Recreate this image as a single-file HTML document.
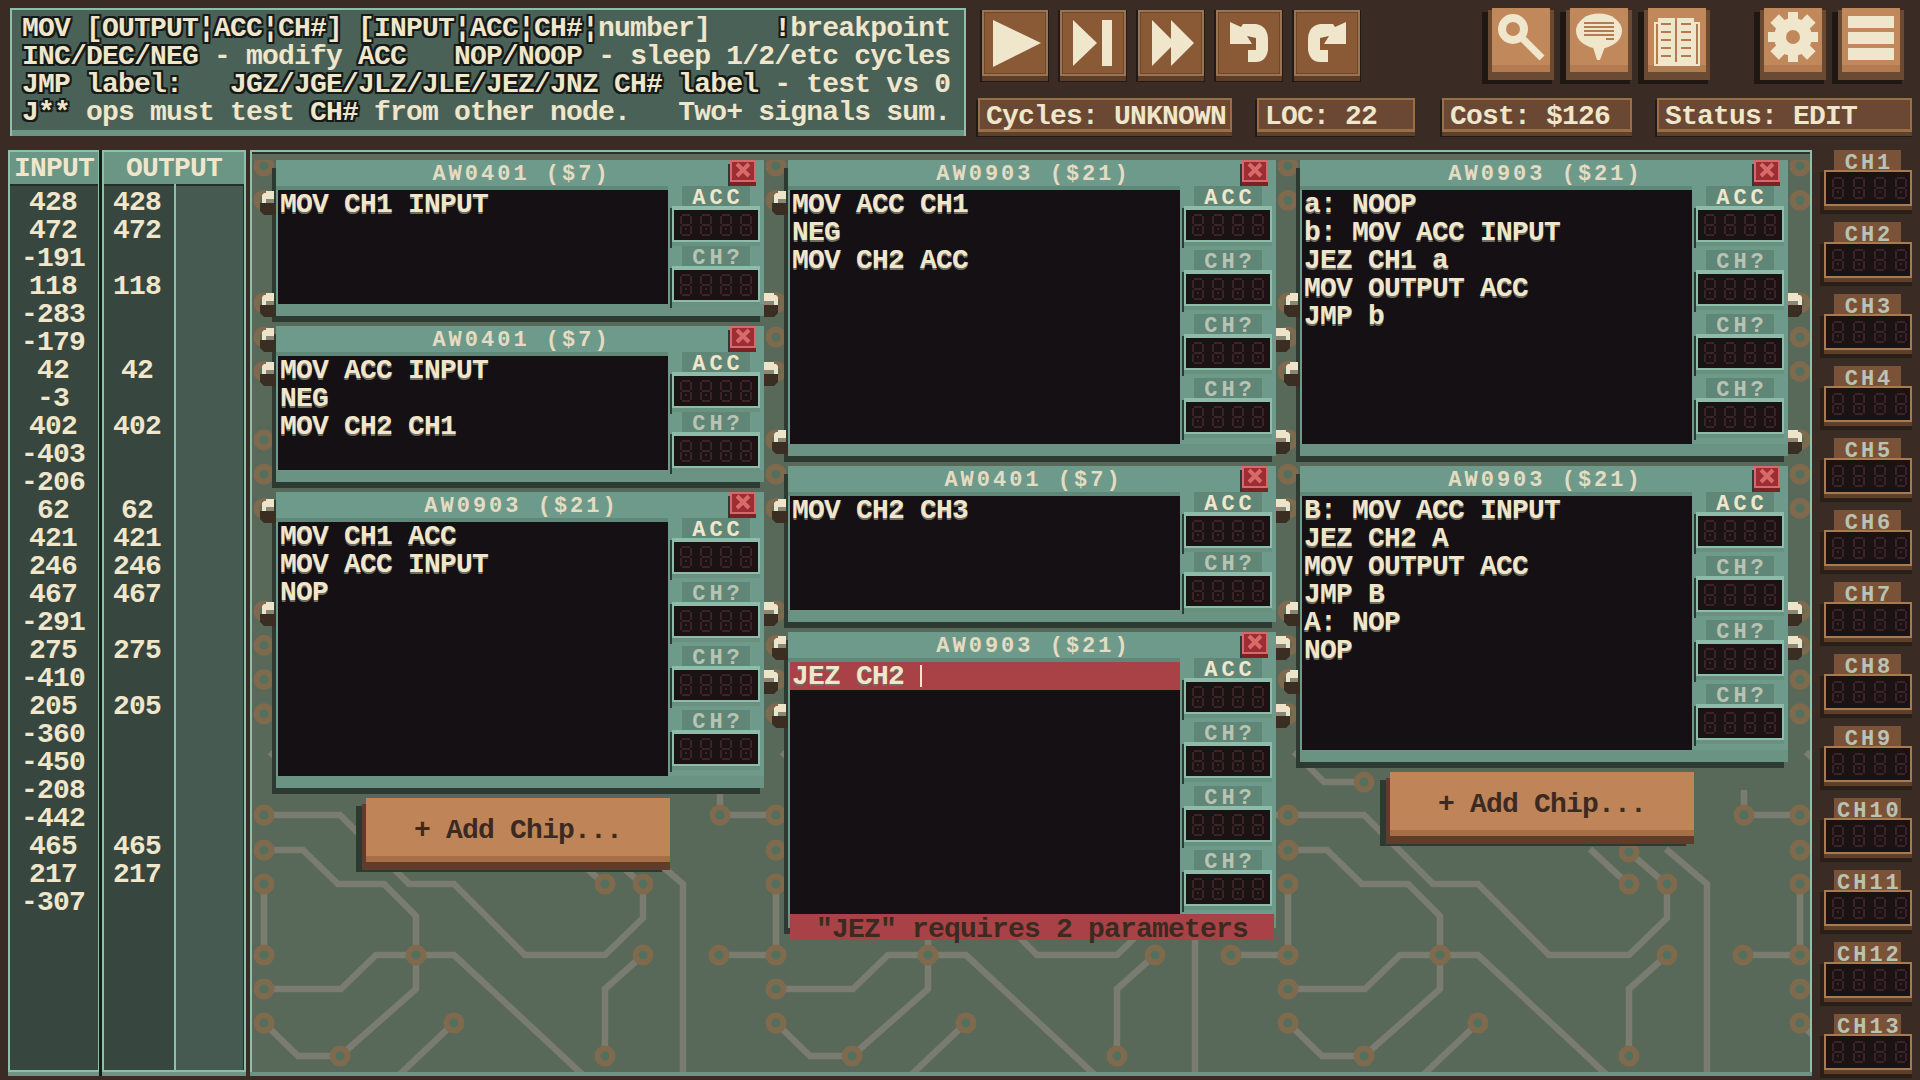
<!DOCTYPE html>
<html><head><meta charset="utf-8"><style>
html,body{margin:0;padding:0;}
body{width:1920px;height:1080px;overflow:hidden;background:#3a2b24;position:relative;font-family:"Liberation Mono",monospace;}
body div, body svg{position:absolute;}
body div{white-space:pre;}
.t{font-size:28px;letter-spacing:-0.8px;line-height:28px;color:#efe6cb;font-weight:bold;}
.t span{position:static;}
.o{text-shadow:2px 0 0 #151a18,-2px 0 0 #151a18,0 2px 0 #151a18,0 -2px 0 #151a18,2px 2px 0 #151a18,-2px 2px 0 #151a18,2px -2px 0 #151a18,-2px -2px 0 #151a18;}
.st{font-weight:bold;}
.hd{font-weight:bold;}
.num{font-weight:bold;}
.code{font-weight:bold;text-shadow:0 2px 0 #6f6c62;}
.tt{font-size:22px;line-height:24px;color:#e3dcc2;font-weight:bold;text-align:center;letter-spacing:3px;padding-left:3px;}
.rl{font-size:22px;line-height:20px;font-weight:bold;text-align:center;letter-spacing:4px;padding-left:4px;}
.err{font-size:28px;letter-spacing:-0.8px;line-height:28px;color:#3b2a22;font-weight:bold;text-align:center;}
.add{font-size:28px;letter-spacing:-0.8px;line-height:28px;color:#3b2a22;font-weight:bold;text-align:center;}
.ch{font-size:22px;line-height:20px;color:#b9c3b3;font-weight:bold;text-align:center;letter-spacing:3px;padding-left:3px;}
</style></head><body>
<svg width="0" height="0" style="position:absolute"><defs><g id="dig" fill="#3b2326"><rect x="2" y="0" width="8" height="2"/><rect x="2" y="10" width="8" height="2"/><rect x="2" y="20" width="8" height="2"/><rect x="0" y="2" width="2" height="8"/><rect x="10" y="2" width="2" height="8"/><rect x="0" y="12" width="2" height="8"/><rect x="10" y="12" width="2" height="8"/><rect x="5" y="14" width="2" height="2"/></g></defs></svg>
<div style="left:10px;top:8px;width:956px;height:128px;background:#8dbfaa;"></div>
<div style="left:12px;top:10px;width:952px;height:120px;background:#4a6158;"></div>
<div style="left:12px;top:130px;width:952px;height:6px;background:#6d9585;"></div>
<div class="t" style="left:22px;top:15px"><span class="o">MOV&nbsp;[OUTPUT¦ACC¦CH#]</span><span class="o">&nbsp;[INPUT¦ACC¦CH#¦</span><span>number]</span><span>&nbsp;&nbsp;&nbsp;&nbsp;</span><span class="o">!</span><span>breakpoint</span></div>
<div class="t" style="left:22px;top:43px"><span class="o">INC/DEC/NEG</span><span>&nbsp;-&nbsp;modify&nbsp;</span><span class="o">ACC</span><span>&nbsp;&nbsp;&nbsp;</span><span class="o">NOP/NOOP</span><span>&nbsp;-&nbsp;sleep&nbsp;1/2/etc&nbsp;cycles</span></div>
<div class="t" style="left:22px;top:71px"><span class="o">JMP&nbsp;label:</span><span>&nbsp;&nbsp;&nbsp;</span><span class="o">JGZ/JGE/JLZ/JLE/JEZ/JNZ&nbsp;CH#&nbsp;label</span><span>&nbsp;-&nbsp;test&nbsp;vs&nbsp;0</span></div>
<div class="t" style="left:22px;top:99px"><span class="o">J**</span><span>&nbsp;ops&nbsp;must&nbsp;test&nbsp;</span><span class="o">CH#</span><span>&nbsp;from&nbsp;other&nbsp;node.&nbsp;&nbsp;&nbsp;Two+&nbsp;signals&nbsp;sum.</span></div>
<div style="left:980px;top:10px;width:69px;height:72px;background:#231a15;"></div>
<div style="left:982px;top:10px;width:66px;height:66px;background:#9a7553;"></div>
<div style="left:984px;top:12px;width:62px;height:62px;background:#6f462b;"></div>
<div style="left:985px;top:13px;width:60px;height:60px;background:#8a5a37;"></div>
<div style="left:982px;top:76px;width:66px;height:5px;background:#5d3d27;"></div>
<svg style="left:982px;top:10px" width="66" height="66" viewBox="0 0 66 66"><polygon points="11,10 59,33 11,57" fill="#efe6cb"/></svg>
<div style="left:1058px;top:10px;width:69px;height:72px;background:#231a15;"></div>
<div style="left:1060px;top:10px;width:66px;height:66px;background:#9a7553;"></div>
<div style="left:1062px;top:12px;width:62px;height:62px;background:#6f462b;"></div>
<div style="left:1063px;top:13px;width:60px;height:60px;background:#8a5a37;"></div>
<div style="left:1060px;top:76px;width:66px;height:5px;background:#5d3d27;"></div>
<svg style="left:1060px;top:10px" width="66" height="66" viewBox="0 0 66 66"><polygon points="13,10 37,33 13,56" fill="#efe6cb"/><rect x="42" y="10" width="10" height="46" fill="#efe6cb"/></svg>
<div style="left:1136px;top:10px;width:69px;height:72px;background:#231a15;"></div>
<div style="left:1138px;top:10px;width:66px;height:66px;background:#9a7553;"></div>
<div style="left:1140px;top:12px;width:62px;height:62px;background:#6f462b;"></div>
<div style="left:1141px;top:13px;width:60px;height:60px;background:#8a5a37;"></div>
<div style="left:1138px;top:76px;width:66px;height:5px;background:#5d3d27;"></div>
<svg style="left:1138px;top:10px" width="66" height="66" viewBox="0 0 66 66"><polygon points="14,10 37,33 14,56" fill="#efe6cb"/><polygon points="33,10 56,33 33,56" fill="#efe6cb"/></svg>
<div style="left:1214px;top:10px;width:69px;height:72px;background:#231a15;"></div>
<div style="left:1216px;top:10px;width:66px;height:66px;background:#9a7553;"></div>
<div style="left:1218px;top:12px;width:62px;height:62px;background:#6f462b;"></div>
<div style="left:1219px;top:13px;width:60px;height:60px;background:#8a5a37;"></div>
<div style="left:1216px;top:76px;width:66px;height:5px;background:#5d3d27;"></div>
<svg style="left:1216px;top:10px" width="66" height="66" viewBox="0 0 66 66"><path d="M14,12 L25,17 L27,14 L40,14 Q52,16 52,30 L52,40 Q50,52 40,52 L32,52 L32,40 L40,40 L40,28 L31,26 L36,34 L14,34 Z" fill="#efe6cb"/></svg>
<div style="left:1292px;top:10px;width:69px;height:72px;background:#231a15;"></div>
<div style="left:1294px;top:10px;width:66px;height:66px;background:#9a7553;"></div>
<div style="left:1296px;top:12px;width:62px;height:62px;background:#6f462b;"></div>
<div style="left:1297px;top:13px;width:60px;height:60px;background:#8a5a37;"></div>
<div style="left:1294px;top:76px;width:66px;height:5px;background:#5d3d27;"></div>
<svg style="left:1294px;top:10px" width="66" height="66" viewBox="0 0 66 66"><path d="M14,12 L25,17 L27,14 L40,14 Q52,16 52,30 L52,40 Q50,52 40,52 L32,52 L32,40 L40,40 L40,28 L31,26 L36,34 L14,34 Z" fill="#efe6cb" transform="translate(66 0) scale(-1 1)"/></svg>
<div style="left:976px;top:100px;width:256px;height:37px;background:#231a15;"></div>
<div style="left:978px;top:98px;width:254px;height:34px;background:#9a6e47;"></div>
<div style="left:980px;top:100px;width:250px;height:29px;background:#6a4833;"></div>
<div style="left:978px;top:132px;width:254px;height:4px;background:#5e412c;"></div>
<div class="st" style="left:986px;top:103px;font-size:28px;letter-spacing:-0.8px;line-height:28px;color:#efe6cb;">Cycles:&nbsp;UNKNOWN</div>
<div style="left:1255px;top:100px;width:160px;height:37px;background:#231a15;"></div>
<div style="left:1257px;top:98px;width:158px;height:34px;background:#9a6e47;"></div>
<div style="left:1259px;top:100px;width:154px;height:29px;background:#6a4833;"></div>
<div style="left:1257px;top:132px;width:158px;height:4px;background:#5e412c;"></div>
<div class="st" style="left:1265px;top:103px;font-size:28px;letter-spacing:-0.8px;line-height:28px;color:#efe6cb;">LOC:&nbsp;22</div>
<div style="left:1440px;top:100px;width:192px;height:37px;background:#231a15;"></div>
<div style="left:1442px;top:98px;width:190px;height:34px;background:#9a6e47;"></div>
<div style="left:1444px;top:100px;width:186px;height:29px;background:#6a4833;"></div>
<div style="left:1442px;top:132px;width:190px;height:4px;background:#5e412c;"></div>
<div class="st" style="left:1450px;top:103px;font-size:28px;letter-spacing:-0.8px;line-height:28px;color:#efe6cb;">Cost:&nbsp;$126</div>
<div style="left:1655px;top:100px;width:257px;height:37px;background:#231a15;"></div>
<div style="left:1657px;top:98px;width:255px;height:34px;background:#9a6e47;"></div>
<div style="left:1659px;top:100px;width:251px;height:29px;background:#6a4833;"></div>
<div style="left:1657px;top:132px;width:255px;height:4px;background:#5e412c;"></div>
<div class="st" style="left:1665px;top:103px;font-size:28px;letter-spacing:-0.8px;line-height:28px;color:#efe6cb;">Status:&nbsp;EDIT</div>
<div style="left:1482px;top:12px;width:70px;height:72px;background:#1f1712;"></div>
<div style="left:1488px;top:10px;width:66px;height:70px;background:#6b4a33;"></div>
<div style="left:1492px;top:8px;width:58px;height:64px;background:#c0885b;"></div>
<div style="left:1492px;top:65px;width:58px;height:7px;background:#b27b50;"></div>
<svg style="left:1492px;top:8px" width="58" height="64" viewBox="0 0 58 64"><circle cx="21" cy="21" r="11" fill="none" stroke="#efe6cb" stroke-width="8"/><line x1="31" y1="31" x2="50" y2="50" stroke="#efe6cb" stroke-width="7"/></svg>
<div style="left:1560px;top:12px;width:70px;height:72px;background:#1f1712;"></div>
<div style="left:1566px;top:10px;width:66px;height:70px;background:#6b4a33;"></div>
<div style="left:1570px;top:8px;width:58px;height:64px;background:#c0885b;"></div>
<div style="left:1570px;top:65px;width:58px;height:7px;background:#b27b50;"></div>
<svg style="left:1570px;top:8px" width="58" height="64" viewBox="0 0 58 64"><ellipse cx="29" cy="23" rx="23" ry="17.5" fill="#efe6cb"/><path d="M22,36 L36,36 L30,52 L27,52 Z" fill="#efe6cb"/><rect x="14" y="14" width="30" height="2" fill="#b57a4f"/><rect x="14" y="18" width="30" height="2" fill="#b57a4f"/><rect x="14" y="22" width="30" height="2" fill="#b57a4f"/><rect x="14" y="26" width="30" height="2" fill="#b57a4f"/><rect x="36" y="30" width="8" height="2" fill="#b57a4f"/></svg>
<div style="left:1638px;top:12px;width:70px;height:72px;background:#1f1712;"></div>
<div style="left:1644px;top:10px;width:66px;height:70px;background:#6b4a33;"></div>
<div style="left:1648px;top:8px;width:58px;height:64px;background:#c0885b;"></div>
<div style="left:1648px;top:65px;width:58px;height:7px;background:#b27b50;"></div>
<svg style="left:1648px;top:8px" width="58" height="64" viewBox="0 0 58 64"><rect x="6" y="14" width="46" height="44" fill="#efe6cb"/><rect x="10" y="10" width="17" height="42" fill="#efe6cb"/><rect x="29" y="10" width="17" height="42" fill="#efe6cb"/><rect x="27" y="12" width="2" height="42" fill="#b57a4f"/><rect x="8" y="16" width="2" height="40" fill="#b57a4f"/><rect x="48" y="16" width="2" height="40" fill="#b57a4f"/><rect x="13" y="15" width="10" height="2" fill="#b57a4f"/><rect x="33" y="15" width="10" height="2" fill="#b57a4f"/><rect x="13" y="23" width="10" height="2" fill="#b57a4f"/><rect x="33" y="23" width="10" height="2" fill="#b57a4f"/><rect x="13" y="31" width="10" height="2" fill="#b57a4f"/><rect x="33" y="31" width="10" height="2" fill="#b57a4f"/><rect x="13" y="39" width="10" height="2" fill="#b57a4f"/><rect x="33" y="39" width="10" height="2" fill="#b57a4f"/><rect x="13" y="47" width="10" height="2" fill="#b57a4f"/><rect x="33" y="47" width="10" height="2" fill="#b57a4f"/></svg>
<div style="left:1754px;top:12px;width:70px;height:72px;background:#1f1712;"></div>
<div style="left:1760px;top:10px;width:66px;height:70px;background:#6b4a33;"></div>
<div style="left:1764px;top:8px;width:58px;height:64px;background:#c0885b;"></div>
<div style="left:1764px;top:65px;width:58px;height:7px;background:#b27b50;"></div>
<svg style="left:1764px;top:8px" width="58" height="64" viewBox="0 0 58 64"><rect x="24" y="4" width="10" height="50" fill="#efe6cb"/><rect x="4" y="24" width="50" height="10" fill="#efe6cb"/><rect x="23" y="3" width="12" height="52" fill="#efe6cb" transform="rotate(45 29 29)"/><rect x="3" y="23" width="52" height="12" fill="#efe6cb" transform="rotate(45 29 29)"/><circle cx="29" cy="29" r="19" fill="#efe6cb"/><circle cx="29" cy="29" r="7" fill="#c0885b"/></svg>
<div style="left:1832px;top:12px;width:70px;height:72px;background:#1f1712;"></div>
<div style="left:1838px;top:10px;width:66px;height:70px;background:#6b4a33;"></div>
<div style="left:1842px;top:8px;width:58px;height:64px;background:#c0885b;"></div>
<div style="left:1842px;top:65px;width:58px;height:7px;background:#b27b50;"></div>
<svg style="left:1842px;top:8px" width="58" height="64" viewBox="0 0 58 64"><rect x="6" y="8" width="46" height="12" fill="#efe6cb"/><rect x="6" y="24" width="46" height="12" fill="#efe6cb"/><rect x="6" y="40" width="46" height="12" fill="#efe6cb"/></svg>
<div style="left:8px;top:150px;width:92px;height:926px;background:#8dbfaa;"></div>
<div style="left:10px;top:152px;width:88px;height:32px;background:#6b9585;"></div>
<div style="left:10px;top:184px;width:88px;height:886px;background:#233029;"></div>
<div style="left:8px;top:1072px;width:92px;height:4px;background:#6d9585;"></div>
<div class="hd" style="left:8px;top:155px;font-size:28px;letter-spacing:-0.8px;line-height:28px;color:#efe6cb;width:92px;text-align:center;">INPUT</div>
<div style="left:10px;top:186px;width:88px;height:884px;background:#37463f;"></div>
<div style="left:99px;top:150px;width:4px;height:926px;background:#1c1a15;"></div>
<div style="left:102px;top:150px;width:144px;height:926px;background:#8dbfaa;"></div>
<div style="left:104px;top:152px;width:140px;height:32px;background:#6b9585;"></div>
<div style="left:104px;top:184px;width:140px;height:886px;background:#233029;"></div>
<div style="left:102px;top:1072px;width:144px;height:4px;background:#6d9585;"></div>
<div class="hd" style="left:102px;top:155px;font-size:28px;letter-spacing:-0.8px;line-height:28px;color:#efe6cb;width:144px;text-align:center;">OUTPUT</div>
<div style="left:104px;top:186px;width:70px;height:884px;background:#37463f;"></div>
<div style="left:174px;top:184px;width:2px;height:886px;background:#8dbfaa;"></div>
<div style="left:176px;top:186px;width:67px;height:884px;background:#465a52;"></div>
<div class="num" style="left:9px;top:189px;font-size:28px;letter-spacing:-0.8px;line-height:28px;color:#efe6cb;width:88px;text-align:center;">428</div>
<div class="num" style="left:9px;top:217px;font-size:28px;letter-spacing:-0.8px;line-height:28px;color:#efe6cb;width:88px;text-align:center;">472</div>
<div class="num" style="left:9px;top:245px;font-size:28px;letter-spacing:-0.8px;line-height:28px;color:#efe6cb;width:88px;text-align:center;">-191</div>
<div class="num" style="left:9px;top:273px;font-size:28px;letter-spacing:-0.8px;line-height:28px;color:#efe6cb;width:88px;text-align:center;">118</div>
<div class="num" style="left:9px;top:301px;font-size:28px;letter-spacing:-0.8px;line-height:28px;color:#efe6cb;width:88px;text-align:center;">-283</div>
<div class="num" style="left:9px;top:329px;font-size:28px;letter-spacing:-0.8px;line-height:28px;color:#efe6cb;width:88px;text-align:center;">-179</div>
<div class="num" style="left:9px;top:357px;font-size:28px;letter-spacing:-0.8px;line-height:28px;color:#efe6cb;width:88px;text-align:center;">42</div>
<div class="num" style="left:9px;top:385px;font-size:28px;letter-spacing:-0.8px;line-height:28px;color:#efe6cb;width:88px;text-align:center;">-3</div>
<div class="num" style="left:9px;top:413px;font-size:28px;letter-spacing:-0.8px;line-height:28px;color:#efe6cb;width:88px;text-align:center;">402</div>
<div class="num" style="left:9px;top:441px;font-size:28px;letter-spacing:-0.8px;line-height:28px;color:#efe6cb;width:88px;text-align:center;">-403</div>
<div class="num" style="left:9px;top:469px;font-size:28px;letter-spacing:-0.8px;line-height:28px;color:#efe6cb;width:88px;text-align:center;">-206</div>
<div class="num" style="left:9px;top:497px;font-size:28px;letter-spacing:-0.8px;line-height:28px;color:#efe6cb;width:88px;text-align:center;">62</div>
<div class="num" style="left:9px;top:525px;font-size:28px;letter-spacing:-0.8px;line-height:28px;color:#efe6cb;width:88px;text-align:center;">421</div>
<div class="num" style="left:9px;top:553px;font-size:28px;letter-spacing:-0.8px;line-height:28px;color:#efe6cb;width:88px;text-align:center;">246</div>
<div class="num" style="left:9px;top:581px;font-size:28px;letter-spacing:-0.8px;line-height:28px;color:#efe6cb;width:88px;text-align:center;">467</div>
<div class="num" style="left:9px;top:609px;font-size:28px;letter-spacing:-0.8px;line-height:28px;color:#efe6cb;width:88px;text-align:center;">-291</div>
<div class="num" style="left:9px;top:637px;font-size:28px;letter-spacing:-0.8px;line-height:28px;color:#efe6cb;width:88px;text-align:center;">275</div>
<div class="num" style="left:9px;top:665px;font-size:28px;letter-spacing:-0.8px;line-height:28px;color:#efe6cb;width:88px;text-align:center;">-410</div>
<div class="num" style="left:9px;top:693px;font-size:28px;letter-spacing:-0.8px;line-height:28px;color:#efe6cb;width:88px;text-align:center;">205</div>
<div class="num" style="left:9px;top:721px;font-size:28px;letter-spacing:-0.8px;line-height:28px;color:#efe6cb;width:88px;text-align:center;">-360</div>
<div class="num" style="left:9px;top:749px;font-size:28px;letter-spacing:-0.8px;line-height:28px;color:#efe6cb;width:88px;text-align:center;">-450</div>
<div class="num" style="left:9px;top:777px;font-size:28px;letter-spacing:-0.8px;line-height:28px;color:#efe6cb;width:88px;text-align:center;">-208</div>
<div class="num" style="left:9px;top:805px;font-size:28px;letter-spacing:-0.8px;line-height:28px;color:#efe6cb;width:88px;text-align:center;">-442</div>
<div class="num" style="left:9px;top:833px;font-size:28px;letter-spacing:-0.8px;line-height:28px;color:#efe6cb;width:88px;text-align:center;">465</div>
<div class="num" style="left:9px;top:861px;font-size:28px;letter-spacing:-0.8px;line-height:28px;color:#efe6cb;width:88px;text-align:center;">217</div>
<div class="num" style="left:9px;top:889px;font-size:28px;letter-spacing:-0.8px;line-height:28px;color:#efe6cb;width:88px;text-align:center;">-307</div>
<div class="num" style="left:102px;top:189px;font-size:28px;letter-spacing:-0.8px;line-height:28px;color:#efe6cb;width:70px;text-align:center;">428</div>
<div class="num" style="left:102px;top:217px;font-size:28px;letter-spacing:-0.8px;line-height:28px;color:#efe6cb;width:70px;text-align:center;">472</div>
<div class="num" style="left:102px;top:273px;font-size:28px;letter-spacing:-0.8px;line-height:28px;color:#efe6cb;width:70px;text-align:center;">118</div>
<div class="num" style="left:102px;top:357px;font-size:28px;letter-spacing:-0.8px;line-height:28px;color:#efe6cb;width:70px;text-align:center;">42</div>
<div class="num" style="left:102px;top:413px;font-size:28px;letter-spacing:-0.8px;line-height:28px;color:#efe6cb;width:70px;text-align:center;">402</div>
<div class="num" style="left:102px;top:497px;font-size:28px;letter-spacing:-0.8px;line-height:28px;color:#efe6cb;width:70px;text-align:center;">62</div>
<div class="num" style="left:102px;top:525px;font-size:28px;letter-spacing:-0.8px;line-height:28px;color:#efe6cb;width:70px;text-align:center;">421</div>
<div class="num" style="left:102px;top:553px;font-size:28px;letter-spacing:-0.8px;line-height:28px;color:#efe6cb;width:70px;text-align:center;">246</div>
<div class="num" style="left:102px;top:581px;font-size:28px;letter-spacing:-0.8px;line-height:28px;color:#efe6cb;width:70px;text-align:center;">467</div>
<div class="num" style="left:102px;top:637px;font-size:28px;letter-spacing:-0.8px;line-height:28px;color:#efe6cb;width:70px;text-align:center;">275</div>
<div class="num" style="left:102px;top:693px;font-size:28px;letter-spacing:-0.8px;line-height:28px;color:#efe6cb;width:70px;text-align:center;">205</div>
<div class="num" style="left:102px;top:833px;font-size:28px;letter-spacing:-0.8px;line-height:28px;color:#efe6cb;width:70px;text-align:center;">465</div>
<div class="num" style="left:102px;top:861px;font-size:28px;letter-spacing:-0.8px;line-height:28px;color:#efe6cb;width:70px;text-align:center;">217</div>
<div style="left:250px;top:150px;width:1562px;height:926px;background:#8dbfaa;"></div>
<div style="left:252px;top:152px;width:1558px;height:920px;background:#58695a;"></div>
<div style="left:252px;top:152px;width:1558px;height:2px;background:#2a3329;"></div>
<div style="left:250px;top:1072px;width:1562px;height:4px;background:#6d9585;"></div>
<svg style="left:252px;top:154px" width="1558" height="918" viewBox="252 154 1558 918"><polyline points="264,815 340,815 409,884 454,884 525,955 605,955 643,918 643,884" fill="none" stroke="#797c6e" stroke-width="6.5" stroke-linejoin="miter"/><polyline points="264,850 303,850 338,884 384,884 416,916 416,989 340,1056" fill="none" stroke="#797c6e" stroke-width="6.5" stroke-linejoin="miter"/><polyline points="264,884 264,955" fill="none" stroke="#797c6e" stroke-width="6.5" stroke-linejoin="miter"/><polyline points="264,989 341,989 376,955 454,955 584,1076" fill="none" stroke="#797c6e" stroke-width="6.5" stroke-linejoin="miter"/><polyline points="264,1023 298,1056 340,1056" fill="none" stroke="#797c6e" stroke-width="6.5" stroke-linejoin="miter"/><polyline points="454,1023 398,1076" fill="none" stroke="#797c6e" stroke-width="6.5" stroke-linejoin="miter"/><polyline points="643,955 605,989 605,1056" fill="none" stroke="#797c6e" stroke-width="6.5" stroke-linejoin="miter"/><polyline points="719,955 776,955" fill="none" stroke="#797c6e" stroke-width="6.5" stroke-linejoin="miter"/><polyline points="642,849 683,884 683,1076" fill="none" stroke="#797c6e" stroke-width="6.5" stroke-linejoin="miter"/><polyline points="566,849 605,885" fill="none" stroke="#797c6e" stroke-width="6.5" stroke-linejoin="miter"/><polyline points="605,852 643,885" fill="none" stroke="#797c6e" stroke-width="6.5" stroke-linejoin="miter"/><polyline points="270,752 300,782 340,782" fill="none" stroke="#797c6e" stroke-width="6.5" stroke-linejoin="miter"/><polyline points="720,790 720,815 776,815" fill="none" stroke="#797c6e" stroke-width="6.5" stroke-linejoin="miter"/><circle cx="264" cy="815" r="7.5" fill="#53705f" stroke="#7f6a4e" stroke-width="6"/><circle cx="264" cy="850" r="7.5" fill="#53705f" stroke="#7f6a4e" stroke-width="6"/><circle cx="264" cy="884" r="7.5" fill="#53705f" stroke="#7f6a4e" stroke-width="6"/><circle cx="264" cy="955" r="7.5" fill="#53705f" stroke="#7f6a4e" stroke-width="6"/><circle cx="264" cy="989" r="7.5" fill="#53705f" stroke="#7f6a4e" stroke-width="6"/><circle cx="264" cy="1023" r="7.5" fill="#53705f" stroke="#7f6a4e" stroke-width="6"/><circle cx="340" cy="1056" r="7.5" fill="#53705f" stroke="#7f6a4e" stroke-width="6"/><circle cx="416" cy="955" r="7.5" fill="#53705f" stroke="#7f6a4e" stroke-width="6"/><circle cx="454" cy="1023" r="7.5" fill="#53705f" stroke="#7f6a4e" stroke-width="6"/><circle cx="605" cy="884" r="7.5" fill="#53705f" stroke="#7f6a4e" stroke-width="6"/><circle cx="643" cy="884" r="7.5" fill="#53705f" stroke="#7f6a4e" stroke-width="6"/><circle cx="643" cy="955" r="7.5" fill="#53705f" stroke="#7f6a4e" stroke-width="6"/><circle cx="605" cy="1056" r="7.5" fill="#53705f" stroke="#7f6a4e" stroke-width="6"/><circle cx="719" cy="955" r="7.5" fill="#53705f" stroke="#7f6a4e" stroke-width="6"/><circle cx="720" cy="815" r="7.5" fill="#53705f" stroke="#7f6a4e" stroke-width="6"/><circle cx="605" cy="852" r="7.5" fill="#53705f" stroke="#7f6a4e" stroke-width="6"/><circle cx="340" cy="782" r="7.5" fill="#53705f" stroke="#7f6a4e" stroke-width="6"/><circle cx="264" cy="166.0" r="7.5" fill="#53705f" stroke="#7f6a4e" stroke-width="6"/><circle cx="264" cy="200.24" r="7.5" fill="#53705f" stroke="#7f6a4e" stroke-width="6"/><circle cx="264" cy="302.96000000000004" r="7.5" fill="#53705f" stroke="#7f6a4e" stroke-width="6"/><circle cx="264" cy="337.20000000000005" r="7.5" fill="#53705f" stroke="#7f6a4e" stroke-width="6"/><circle cx="264" cy="371.44" r="7.5" fill="#53705f" stroke="#7f6a4e" stroke-width="6"/><circle cx="264" cy="439.92" r="7.5" fill="#53705f" stroke="#7f6a4e" stroke-width="6"/><circle cx="264" cy="474.16" r="7.5" fill="#53705f" stroke="#7f6a4e" stroke-width="6"/><circle cx="264" cy="508.40000000000003" r="7.5" fill="#53705f" stroke="#7f6a4e" stroke-width="6"/><circle cx="264" cy="611.12" r="7.5" fill="#53705f" stroke="#7f6a4e" stroke-width="6"/><circle cx="264" cy="645.36" r="7.5" fill="#53705f" stroke="#7f6a4e" stroke-width="6"/><circle cx="264" cy="679.6" r="7.5" fill="#53705f" stroke="#7f6a4e" stroke-width="6"/><circle cx="264" cy="713.84" r="7.5" fill="#53705f" stroke="#7f6a4e" stroke-width="6"/><polyline points="776,815 852,815 921,884 966,884 1037,955 1117,955 1155,918 1155,884" fill="none" stroke="#797c6e" stroke-width="6.5" stroke-linejoin="miter"/><polyline points="776,850 815,850 850,884 896,884 928,916 928,989 852,1056" fill="none" stroke="#797c6e" stroke-width="6.5" stroke-linejoin="miter"/><polyline points="776,884 776,955" fill="none" stroke="#797c6e" stroke-width="6.5" stroke-linejoin="miter"/><polyline points="776,989 853,989 888,955 966,955 1096,1076" fill="none" stroke="#797c6e" stroke-width="6.5" stroke-linejoin="miter"/><polyline points="776,1023 810,1056 852,1056" fill="none" stroke="#797c6e" stroke-width="6.5" stroke-linejoin="miter"/><polyline points="966,1023 910,1076" fill="none" stroke="#797c6e" stroke-width="6.5" stroke-linejoin="miter"/><polyline points="1155,955 1117,989 1117,1056" fill="none" stroke="#797c6e" stroke-width="6.5" stroke-linejoin="miter"/><polyline points="1231,955 1288,955" fill="none" stroke="#797c6e" stroke-width="6.5" stroke-linejoin="miter"/><polyline points="1154,849 1195,884 1195,1076" fill="none" stroke="#797c6e" stroke-width="6.5" stroke-linejoin="miter"/><polyline points="1078,849 1117,885" fill="none" stroke="#797c6e" stroke-width="6.5" stroke-linejoin="miter"/><polyline points="1117,852 1155,885" fill="none" stroke="#797c6e" stroke-width="6.5" stroke-linejoin="miter"/><polyline points="782,752 812,782 852,782" fill="none" stroke="#797c6e" stroke-width="6.5" stroke-linejoin="miter"/><polyline points="1232,790 1232,815 1288,815" fill="none" stroke="#797c6e" stroke-width="6.5" stroke-linejoin="miter"/><circle cx="776" cy="815" r="7.5" fill="#53705f" stroke="#7f6a4e" stroke-width="6"/><circle cx="776" cy="850" r="7.5" fill="#53705f" stroke="#7f6a4e" stroke-width="6"/><circle cx="776" cy="884" r="7.5" fill="#53705f" stroke="#7f6a4e" stroke-width="6"/><circle cx="776" cy="955" r="7.5" fill="#53705f" stroke="#7f6a4e" stroke-width="6"/><circle cx="776" cy="989" r="7.5" fill="#53705f" stroke="#7f6a4e" stroke-width="6"/><circle cx="776" cy="1023" r="7.5" fill="#53705f" stroke="#7f6a4e" stroke-width="6"/><circle cx="852" cy="1056" r="7.5" fill="#53705f" stroke="#7f6a4e" stroke-width="6"/><circle cx="928" cy="955" r="7.5" fill="#53705f" stroke="#7f6a4e" stroke-width="6"/><circle cx="966" cy="1023" r="7.5" fill="#53705f" stroke="#7f6a4e" stroke-width="6"/><circle cx="1117" cy="884" r="7.5" fill="#53705f" stroke="#7f6a4e" stroke-width="6"/><circle cx="1155" cy="884" r="7.5" fill="#53705f" stroke="#7f6a4e" stroke-width="6"/><circle cx="1155" cy="955" r="7.5" fill="#53705f" stroke="#7f6a4e" stroke-width="6"/><circle cx="1117" cy="1056" r="7.5" fill="#53705f" stroke="#7f6a4e" stroke-width="6"/><circle cx="1231" cy="955" r="7.5" fill="#53705f" stroke="#7f6a4e" stroke-width="6"/><circle cx="1232" cy="815" r="7.5" fill="#53705f" stroke="#7f6a4e" stroke-width="6"/><circle cx="1117" cy="852" r="7.5" fill="#53705f" stroke="#7f6a4e" stroke-width="6"/><circle cx="852" cy="782" r="7.5" fill="#53705f" stroke="#7f6a4e" stroke-width="6"/><circle cx="776" cy="166.0" r="7.5" fill="#53705f" stroke="#7f6a4e" stroke-width="6"/><circle cx="776" cy="200.24" r="7.5" fill="#53705f" stroke="#7f6a4e" stroke-width="6"/><circle cx="776" cy="302.96000000000004" r="7.5" fill="#53705f" stroke="#7f6a4e" stroke-width="6"/><circle cx="776" cy="337.20000000000005" r="7.5" fill="#53705f" stroke="#7f6a4e" stroke-width="6"/><circle cx="776" cy="371.44" r="7.5" fill="#53705f" stroke="#7f6a4e" stroke-width="6"/><circle cx="776" cy="439.92" r="7.5" fill="#53705f" stroke="#7f6a4e" stroke-width="6"/><circle cx="776" cy="474.16" r="7.5" fill="#53705f" stroke="#7f6a4e" stroke-width="6"/><circle cx="776" cy="508.40000000000003" r="7.5" fill="#53705f" stroke="#7f6a4e" stroke-width="6"/><circle cx="776" cy="611.12" r="7.5" fill="#53705f" stroke="#7f6a4e" stroke-width="6"/><circle cx="776" cy="645.36" r="7.5" fill="#53705f" stroke="#7f6a4e" stroke-width="6"/><circle cx="776" cy="679.6" r="7.5" fill="#53705f" stroke="#7f6a4e" stroke-width="6"/><circle cx="776" cy="713.84" r="7.5" fill="#53705f" stroke="#7f6a4e" stroke-width="6"/><polyline points="1288,815 1364,815 1433,884 1478,884 1549,955 1629,955 1667,918 1667,884" fill="none" stroke="#797c6e" stroke-width="6.5" stroke-linejoin="miter"/><polyline points="1288,850 1327,850 1362,884 1408,884 1440,916 1440,989 1364,1056" fill="none" stroke="#797c6e" stroke-width="6.5" stroke-linejoin="miter"/><polyline points="1288,884 1288,955" fill="none" stroke="#797c6e" stroke-width="6.5" stroke-linejoin="miter"/><polyline points="1288,989 1365,989 1400,955 1478,955 1608,1076" fill="none" stroke="#797c6e" stroke-width="6.5" stroke-linejoin="miter"/><polyline points="1288,1023 1322,1056 1364,1056" fill="none" stroke="#797c6e" stroke-width="6.5" stroke-linejoin="miter"/><polyline points="1478,1023 1422,1076" fill="none" stroke="#797c6e" stroke-width="6.5" stroke-linejoin="miter"/><polyline points="1667,955 1629,989 1629,1056" fill="none" stroke="#797c6e" stroke-width="6.5" stroke-linejoin="miter"/><polyline points="1743,955 1800,955" fill="none" stroke="#797c6e" stroke-width="6.5" stroke-linejoin="miter"/><polyline points="1666,849 1707,884 1707,1076" fill="none" stroke="#797c6e" stroke-width="6.5" stroke-linejoin="miter"/><polyline points="1590,849 1629,885" fill="none" stroke="#797c6e" stroke-width="6.5" stroke-linejoin="miter"/><polyline points="1629,852 1667,885" fill="none" stroke="#797c6e" stroke-width="6.5" stroke-linejoin="miter"/><polyline points="1294,752 1324,782 1364,782" fill="none" stroke="#797c6e" stroke-width="6.5" stroke-linejoin="miter"/><polyline points="1744,790 1744,815 1800,815" fill="none" stroke="#797c6e" stroke-width="6.5" stroke-linejoin="miter"/><circle cx="1288" cy="815" r="7.5" fill="#53705f" stroke="#7f6a4e" stroke-width="6"/><circle cx="1288" cy="850" r="7.5" fill="#53705f" stroke="#7f6a4e" stroke-width="6"/><circle cx="1288" cy="884" r="7.5" fill="#53705f" stroke="#7f6a4e" stroke-width="6"/><circle cx="1288" cy="955" r="7.5" fill="#53705f" stroke="#7f6a4e" stroke-width="6"/><circle cx="1288" cy="989" r="7.5" fill="#53705f" stroke="#7f6a4e" stroke-width="6"/><circle cx="1288" cy="1023" r="7.5" fill="#53705f" stroke="#7f6a4e" stroke-width="6"/><circle cx="1364" cy="1056" r="7.5" fill="#53705f" stroke="#7f6a4e" stroke-width="6"/><circle cx="1440" cy="955" r="7.5" fill="#53705f" stroke="#7f6a4e" stroke-width="6"/><circle cx="1478" cy="1023" r="7.5" fill="#53705f" stroke="#7f6a4e" stroke-width="6"/><circle cx="1629" cy="884" r="7.5" fill="#53705f" stroke="#7f6a4e" stroke-width="6"/><circle cx="1667" cy="884" r="7.5" fill="#53705f" stroke="#7f6a4e" stroke-width="6"/><circle cx="1667" cy="955" r="7.5" fill="#53705f" stroke="#7f6a4e" stroke-width="6"/><circle cx="1629" cy="1056" r="7.5" fill="#53705f" stroke="#7f6a4e" stroke-width="6"/><circle cx="1743" cy="955" r="7.5" fill="#53705f" stroke="#7f6a4e" stroke-width="6"/><circle cx="1744" cy="815" r="7.5" fill="#53705f" stroke="#7f6a4e" stroke-width="6"/><circle cx="1629" cy="852" r="7.5" fill="#53705f" stroke="#7f6a4e" stroke-width="6"/><circle cx="1364" cy="782" r="7.5" fill="#53705f" stroke="#7f6a4e" stroke-width="6"/><circle cx="1288" cy="166.0" r="7.5" fill="#53705f" stroke="#7f6a4e" stroke-width="6"/><circle cx="1288" cy="200.24" r="7.5" fill="#53705f" stroke="#7f6a4e" stroke-width="6"/><circle cx="1288" cy="302.96000000000004" r="7.5" fill="#53705f" stroke="#7f6a4e" stroke-width="6"/><circle cx="1288" cy="337.20000000000005" r="7.5" fill="#53705f" stroke="#7f6a4e" stroke-width="6"/><circle cx="1288" cy="371.44" r="7.5" fill="#53705f" stroke="#7f6a4e" stroke-width="6"/><circle cx="1288" cy="439.92" r="7.5" fill="#53705f" stroke="#7f6a4e" stroke-width="6"/><circle cx="1288" cy="474.16" r="7.5" fill="#53705f" stroke="#7f6a4e" stroke-width="6"/><circle cx="1288" cy="508.40000000000003" r="7.5" fill="#53705f" stroke="#7f6a4e" stroke-width="6"/><circle cx="1288" cy="611.12" r="7.5" fill="#53705f" stroke="#7f6a4e" stroke-width="6"/><circle cx="1288" cy="645.36" r="7.5" fill="#53705f" stroke="#7f6a4e" stroke-width="6"/><circle cx="1288" cy="679.6" r="7.5" fill="#53705f" stroke="#7f6a4e" stroke-width="6"/><circle cx="1288" cy="713.84" r="7.5" fill="#53705f" stroke="#7f6a4e" stroke-width="6"/><polyline points="1800,815 1876,815 1945,884 1990,884 2061,955 2141,955 2179,918 2179,884" fill="none" stroke="#797c6e" stroke-width="6.5" stroke-linejoin="miter"/><polyline points="1800,850 1839,850 1874,884 1920,884 1952,916 1952,989 1876,1056" fill="none" stroke="#797c6e" stroke-width="6.5" stroke-linejoin="miter"/><polyline points="1800,884 1800,955" fill="none" stroke="#797c6e" stroke-width="6.5" stroke-linejoin="miter"/><polyline points="1800,989 1877,989 1912,955 1990,955 2120,1076" fill="none" stroke="#797c6e" stroke-width="6.5" stroke-linejoin="miter"/><polyline points="1800,1023 1834,1056 1876,1056" fill="none" stroke="#797c6e" stroke-width="6.5" stroke-linejoin="miter"/><polyline points="1990,1023 1934,1076" fill="none" stroke="#797c6e" stroke-width="6.5" stroke-linejoin="miter"/><polyline points="2179,955 2141,989 2141,1056" fill="none" stroke="#797c6e" stroke-width="6.5" stroke-linejoin="miter"/><polyline points="2255,955 2312,955" fill="none" stroke="#797c6e" stroke-width="6.5" stroke-linejoin="miter"/><polyline points="2178,849 2219,884 2219,1076" fill="none" stroke="#797c6e" stroke-width="6.5" stroke-linejoin="miter"/><polyline points="2102,849 2141,885" fill="none" stroke="#797c6e" stroke-width="6.5" stroke-linejoin="miter"/><polyline points="2141,852 2179,885" fill="none" stroke="#797c6e" stroke-width="6.5" stroke-linejoin="miter"/><polyline points="1806,752 1836,782 1876,782" fill="none" stroke="#797c6e" stroke-width="6.5" stroke-linejoin="miter"/><polyline points="2256,790 2256,815 2312,815" fill="none" stroke="#797c6e" stroke-width="6.5" stroke-linejoin="miter"/><circle cx="1800" cy="815" r="7.5" fill="#53705f" stroke="#7f6a4e" stroke-width="6"/><circle cx="1800" cy="850" r="7.5" fill="#53705f" stroke="#7f6a4e" stroke-width="6"/><circle cx="1800" cy="884" r="7.5" fill="#53705f" stroke="#7f6a4e" stroke-width="6"/><circle cx="1800" cy="955" r="7.5" fill="#53705f" stroke="#7f6a4e" stroke-width="6"/><circle cx="1800" cy="989" r="7.5" fill="#53705f" stroke="#7f6a4e" stroke-width="6"/><circle cx="1800" cy="1023" r="7.5" fill="#53705f" stroke="#7f6a4e" stroke-width="6"/><circle cx="1876" cy="1056" r="7.5" fill="#53705f" stroke="#7f6a4e" stroke-width="6"/><circle cx="1952" cy="955" r="7.5" fill="#53705f" stroke="#7f6a4e" stroke-width="6"/><circle cx="1990" cy="1023" r="7.5" fill="#53705f" stroke="#7f6a4e" stroke-width="6"/><circle cx="2141" cy="884" r="7.5" fill="#53705f" stroke="#7f6a4e" stroke-width="6"/><circle cx="2179" cy="884" r="7.5" fill="#53705f" stroke="#7f6a4e" stroke-width="6"/><circle cx="2179" cy="955" r="7.5" fill="#53705f" stroke="#7f6a4e" stroke-width="6"/><circle cx="2141" cy="1056" r="7.5" fill="#53705f" stroke="#7f6a4e" stroke-width="6"/><circle cx="2255" cy="955" r="7.5" fill="#53705f" stroke="#7f6a4e" stroke-width="6"/><circle cx="2256" cy="815" r="7.5" fill="#53705f" stroke="#7f6a4e" stroke-width="6"/><circle cx="2141" cy="852" r="7.5" fill="#53705f" stroke="#7f6a4e" stroke-width="6"/><circle cx="1876" cy="782" r="7.5" fill="#53705f" stroke="#7f6a4e" stroke-width="6"/><circle cx="1800" cy="166.0" r="7.5" fill="#53705f" stroke="#7f6a4e" stroke-width="6"/><circle cx="1800" cy="200.24" r="7.5" fill="#53705f" stroke="#7f6a4e" stroke-width="6"/><circle cx="1800" cy="302.96000000000004" r="7.5" fill="#53705f" stroke="#7f6a4e" stroke-width="6"/><circle cx="1800" cy="337.20000000000005" r="7.5" fill="#53705f" stroke="#7f6a4e" stroke-width="6"/><circle cx="1800" cy="371.44" r="7.5" fill="#53705f" stroke="#7f6a4e" stroke-width="6"/><circle cx="1800" cy="439.92" r="7.5" fill="#53705f" stroke="#7f6a4e" stroke-width="6"/><circle cx="1800" cy="474.16" r="7.5" fill="#53705f" stroke="#7f6a4e" stroke-width="6"/><circle cx="1800" cy="508.40000000000003" r="7.5" fill="#53705f" stroke="#7f6a4e" stroke-width="6"/><circle cx="1800" cy="611.12" r="7.5" fill="#53705f" stroke="#7f6a4e" stroke-width="6"/><circle cx="1800" cy="645.36" r="7.5" fill="#53705f" stroke="#7f6a4e" stroke-width="6"/><circle cx="1800" cy="679.6" r="7.5" fill="#53705f" stroke="#7f6a4e" stroke-width="6"/><circle cx="1800" cy="713.84" r="7.5" fill="#53705f" stroke="#7f6a4e" stroke-width="6"/></svg>
<div style="left:252px;top:152px;width:1558px;height:2px;background:#2a3329;"></div>
<div style="left:252px;top:154px;width:1558px;height:6px;background:#5e6b5b;"></div>
<div style="left:272px;top:168px;width:488px;height:154px;background:#2d3a31;"></div>
<div style="left:276px;top:160px;width:488px;height:156px;background:#6e9a8b;"></div>
<div style="left:276px;top:186px;width:392px;height:4px;background:#5f8878;"></div>
<div style="left:276px;top:304px;width:488px;height:12px;background:#6a9383;"></div>
<div style="left:278px;top:190px;width:390px;height:114px;background:#141013;"></div>
<div class="tt" style="left:276px;top:163px;width:485px;">AW0401 ($7)</div>
<div style="left:728px;top:164px;width:2px;height:24px;background:#2d3a31;"></div>
<div style="left:730px;top:160px;width:26px;height:22px;background:#d36b6b;"></div>
<div style="left:732px;top:162px;width:22px;height:18px;background:#9b2e34;"></div>
<div style="left:730px;top:182px;width:26px;height:4px;background:#7a2228;"></div>
<svg style="left:730px;top:160px" width="26" height="22" viewBox="0 0 26 22"><path d="M7,4 L19,16 M19,4 L7,16" stroke="#d86a6a" stroke-width="4"/></svg>
<div style="left:682px;top:186px;width:68px;height:20px;background:#5f8677;"></div>
<div class="rl" style="left:682px;top:189px;width:64px;color:#efe6cb">ACC</div>
<div style="left:670px;top:208px;width:2px;height:40px;background:#2d3a31;"></div>
<div style="left:672px;top:206px;width:88px;height:36px;background:#8dbcaa;"></div>
<div style="left:674px;top:210px;width:84px;height:30px;background:#1b1214;"></div>
<div style="left:672px;top:242px;width:88px;height:4px;background:#68927f;"></div>
<svg style="left:674px;top:210px" width="84" height="30" viewBox="0 0 84 30"><use href="#dig" x="6" y="4"/><use href="#dig" x="26" y="4"/><use href="#dig" x="46" y="4"/><use href="#dig" x="66" y="4"/></svg>
<div style="left:682px;top:246px;width:68px;height:20px;background:#5f8677;"></div>
<div class="rl" style="left:682px;top:249px;width:64px;color:#b9c3b3">CH?</div>
<div style="left:670px;top:268px;width:2px;height:40px;background:#2d3a31;"></div>
<div style="left:672px;top:266px;width:88px;height:36px;background:#8dbcaa;"></div>
<div style="left:674px;top:270px;width:84px;height:30px;background:#1b1214;"></div>
<div style="left:672px;top:302px;width:88px;height:4px;background:#68927f;"></div>
<svg style="left:674px;top:270px" width="84" height="30" viewBox="0 0 84 30"><use href="#dig" x="6" y="4"/><use href="#dig" x="26" y="4"/><use href="#dig" x="46" y="4"/><use href="#dig" x="66" y="4"/></svg>
<div class="code" style="left:280px;top:191px;font-size:28px;letter-spacing:-0.8px;line-height:28px;color:#efe6cb;">MOV&nbsp;CH1&nbsp;INPUT</div>
<div style="left:272px;top:334px;width:488px;height:154px;background:#2d3a31;"></div>
<div style="left:276px;top:326px;width:488px;height:156px;background:#6e9a8b;"></div>
<div style="left:276px;top:352px;width:392px;height:4px;background:#5f8878;"></div>
<div style="left:276px;top:470px;width:488px;height:12px;background:#6a9383;"></div>
<div style="left:278px;top:356px;width:390px;height:114px;background:#141013;"></div>
<div class="tt" style="left:276px;top:329px;width:485px;">AW0401 ($7)</div>
<div style="left:728px;top:330px;width:2px;height:24px;background:#2d3a31;"></div>
<div style="left:730px;top:326px;width:26px;height:22px;background:#d36b6b;"></div>
<div style="left:732px;top:328px;width:22px;height:18px;background:#9b2e34;"></div>
<div style="left:730px;top:348px;width:26px;height:4px;background:#7a2228;"></div>
<svg style="left:730px;top:326px" width="26" height="22" viewBox="0 0 26 22"><path d="M7,4 L19,16 M19,4 L7,16" stroke="#d86a6a" stroke-width="4"/></svg>
<div style="left:682px;top:352px;width:68px;height:20px;background:#5f8677;"></div>
<div class="rl" style="left:682px;top:355px;width:64px;color:#efe6cb">ACC</div>
<div style="left:670px;top:374px;width:2px;height:40px;background:#2d3a31;"></div>
<div style="left:672px;top:372px;width:88px;height:36px;background:#8dbcaa;"></div>
<div style="left:674px;top:376px;width:84px;height:30px;background:#1b1214;"></div>
<div style="left:672px;top:408px;width:88px;height:4px;background:#68927f;"></div>
<svg style="left:674px;top:376px" width="84" height="30" viewBox="0 0 84 30"><use href="#dig" x="6" y="4"/><use href="#dig" x="26" y="4"/><use href="#dig" x="46" y="4"/><use href="#dig" x="66" y="4"/></svg>
<div style="left:682px;top:412px;width:68px;height:20px;background:#5f8677;"></div>
<div class="rl" style="left:682px;top:415px;width:64px;color:#b9c3b3">CH?</div>
<div style="left:670px;top:434px;width:2px;height:40px;background:#2d3a31;"></div>
<div style="left:672px;top:432px;width:88px;height:36px;background:#8dbcaa;"></div>
<div style="left:674px;top:436px;width:84px;height:30px;background:#1b1214;"></div>
<div style="left:672px;top:468px;width:88px;height:4px;background:#68927f;"></div>
<svg style="left:674px;top:436px" width="84" height="30" viewBox="0 0 84 30"><use href="#dig" x="6" y="4"/><use href="#dig" x="26" y="4"/><use href="#dig" x="46" y="4"/><use href="#dig" x="66" y="4"/></svg>
<div class="code" style="left:280px;top:357px;font-size:28px;letter-spacing:-0.8px;line-height:28px;color:#efe6cb;">MOV&nbsp;ACC&nbsp;INPUT</div>
<div class="code" style="left:280px;top:385px;font-size:28px;letter-spacing:-0.8px;line-height:28px;color:#efe6cb;">NEG</div>
<div class="code" style="left:280px;top:413px;font-size:28px;letter-spacing:-0.8px;line-height:28px;color:#efe6cb;">MOV&nbsp;CH2&nbsp;CH1</div>
<div style="left:272px;top:500px;width:488px;height:294px;background:#2d3a31;"></div>
<div style="left:276px;top:492px;width:488px;height:296px;background:#6e9a8b;"></div>
<div style="left:276px;top:518px;width:392px;height:4px;background:#5f8878;"></div>
<div style="left:276px;top:776px;width:488px;height:12px;background:#6a9383;"></div>
<div style="left:278px;top:522px;width:390px;height:254px;background:#141013;"></div>
<div class="tt" style="left:276px;top:495px;width:485px;">AW0903 ($21)</div>
<div style="left:728px;top:496px;width:2px;height:24px;background:#2d3a31;"></div>
<div style="left:730px;top:492px;width:26px;height:22px;background:#d36b6b;"></div>
<div style="left:732px;top:494px;width:22px;height:18px;background:#9b2e34;"></div>
<div style="left:730px;top:514px;width:26px;height:4px;background:#7a2228;"></div>
<svg style="left:730px;top:492px" width="26" height="22" viewBox="0 0 26 22"><path d="M7,4 L19,16 M19,4 L7,16" stroke="#d86a6a" stroke-width="4"/></svg>
<div style="left:682px;top:518px;width:68px;height:20px;background:#5f8677;"></div>
<div class="rl" style="left:682px;top:521px;width:64px;color:#efe6cb">ACC</div>
<div style="left:670px;top:540px;width:2px;height:40px;background:#2d3a31;"></div>
<div style="left:672px;top:538px;width:88px;height:36px;background:#8dbcaa;"></div>
<div style="left:674px;top:542px;width:84px;height:30px;background:#1b1214;"></div>
<div style="left:672px;top:574px;width:88px;height:4px;background:#68927f;"></div>
<svg style="left:674px;top:542px" width="84" height="30" viewBox="0 0 84 30"><use href="#dig" x="6" y="4"/><use href="#dig" x="26" y="4"/><use href="#dig" x="46" y="4"/><use href="#dig" x="66" y="4"/></svg>
<div style="left:682px;top:582px;width:68px;height:20px;background:#5f8677;"></div>
<div class="rl" style="left:682px;top:585px;width:64px;color:#b9c3b3">CH?</div>
<div style="left:670px;top:604px;width:2px;height:40px;background:#2d3a31;"></div>
<div style="left:672px;top:602px;width:88px;height:36px;background:#8dbcaa;"></div>
<div style="left:674px;top:606px;width:84px;height:30px;background:#1b1214;"></div>
<div style="left:672px;top:638px;width:88px;height:4px;background:#68927f;"></div>
<svg style="left:674px;top:606px" width="84" height="30" viewBox="0 0 84 30"><use href="#dig" x="6" y="4"/><use href="#dig" x="26" y="4"/><use href="#dig" x="46" y="4"/><use href="#dig" x="66" y="4"/></svg>
<div style="left:682px;top:646px;width:68px;height:20px;background:#5f8677;"></div>
<div class="rl" style="left:682px;top:649px;width:64px;color:#b9c3b3">CH?</div>
<div style="left:670px;top:668px;width:2px;height:40px;background:#2d3a31;"></div>
<div style="left:672px;top:666px;width:88px;height:36px;background:#8dbcaa;"></div>
<div style="left:674px;top:670px;width:84px;height:30px;background:#1b1214;"></div>
<div style="left:672px;top:702px;width:88px;height:4px;background:#68927f;"></div>
<svg style="left:674px;top:670px" width="84" height="30" viewBox="0 0 84 30"><use href="#dig" x="6" y="4"/><use href="#dig" x="26" y="4"/><use href="#dig" x="46" y="4"/><use href="#dig" x="66" y="4"/></svg>
<div style="left:682px;top:710px;width:68px;height:20px;background:#5f8677;"></div>
<div class="rl" style="left:682px;top:713px;width:64px;color:#b9c3b3">CH?</div>
<div style="left:670px;top:732px;width:2px;height:40px;background:#2d3a31;"></div>
<div style="left:672px;top:730px;width:88px;height:36px;background:#8dbcaa;"></div>
<div style="left:674px;top:734px;width:84px;height:30px;background:#1b1214;"></div>
<div style="left:672px;top:766px;width:88px;height:4px;background:#68927f;"></div>
<svg style="left:674px;top:734px" width="84" height="30" viewBox="0 0 84 30"><use href="#dig" x="6" y="4"/><use href="#dig" x="26" y="4"/><use href="#dig" x="46" y="4"/><use href="#dig" x="66" y="4"/></svg>
<div class="code" style="left:280px;top:523px;font-size:28px;letter-spacing:-0.8px;line-height:28px;color:#efe6cb;">MOV&nbsp;CH1&nbsp;ACC</div>
<div class="code" style="left:280px;top:551px;font-size:28px;letter-spacing:-0.8px;line-height:28px;color:#efe6cb;">MOV&nbsp;ACC&nbsp;INPUT</div>
<div class="code" style="left:280px;top:579px;font-size:28px;letter-spacing:-0.8px;line-height:28px;color:#efe6cb;">NOP</div>
<div style="left:784px;top:168px;width:488px;height:294px;background:#2d3a31;"></div>
<div style="left:788px;top:160px;width:488px;height:296px;background:#6e9a8b;"></div>
<div style="left:788px;top:186px;width:392px;height:4px;background:#5f8878;"></div>
<div style="left:788px;top:444px;width:488px;height:12px;background:#6a9383;"></div>
<div style="left:790px;top:190px;width:390px;height:254px;background:#141013;"></div>
<div class="tt" style="left:788px;top:163px;width:485px;">AW0903 ($21)</div>
<div style="left:1240px;top:164px;width:2px;height:24px;background:#2d3a31;"></div>
<div style="left:1242px;top:160px;width:26px;height:22px;background:#d36b6b;"></div>
<div style="left:1244px;top:162px;width:22px;height:18px;background:#9b2e34;"></div>
<div style="left:1242px;top:182px;width:26px;height:4px;background:#7a2228;"></div>
<svg style="left:1242px;top:160px" width="26" height="22" viewBox="0 0 26 22"><path d="M7,4 L19,16 M19,4 L7,16" stroke="#d86a6a" stroke-width="4"/></svg>
<div style="left:1194px;top:186px;width:68px;height:20px;background:#5f8677;"></div>
<div class="rl" style="left:1194px;top:189px;width:64px;color:#efe6cb">ACC</div>
<div style="left:1182px;top:208px;width:2px;height:40px;background:#2d3a31;"></div>
<div style="left:1184px;top:206px;width:88px;height:36px;background:#8dbcaa;"></div>
<div style="left:1186px;top:210px;width:84px;height:30px;background:#1b1214;"></div>
<div style="left:1184px;top:242px;width:88px;height:4px;background:#68927f;"></div>
<svg style="left:1186px;top:210px" width="84" height="30" viewBox="0 0 84 30"><use href="#dig" x="6" y="4"/><use href="#dig" x="26" y="4"/><use href="#dig" x="46" y="4"/><use href="#dig" x="66" y="4"/></svg>
<div style="left:1194px;top:250px;width:68px;height:20px;background:#5f8677;"></div>
<div class="rl" style="left:1194px;top:253px;width:64px;color:#b9c3b3">CH?</div>
<div style="left:1182px;top:272px;width:2px;height:40px;background:#2d3a31;"></div>
<div style="left:1184px;top:270px;width:88px;height:36px;background:#8dbcaa;"></div>
<div style="left:1186px;top:274px;width:84px;height:30px;background:#1b1214;"></div>
<div style="left:1184px;top:306px;width:88px;height:4px;background:#68927f;"></div>
<svg style="left:1186px;top:274px" width="84" height="30" viewBox="0 0 84 30"><use href="#dig" x="6" y="4"/><use href="#dig" x="26" y="4"/><use href="#dig" x="46" y="4"/><use href="#dig" x="66" y="4"/></svg>
<div style="left:1194px;top:314px;width:68px;height:20px;background:#5f8677;"></div>
<div class="rl" style="left:1194px;top:317px;width:64px;color:#b9c3b3">CH?</div>
<div style="left:1182px;top:336px;width:2px;height:40px;background:#2d3a31;"></div>
<div style="left:1184px;top:334px;width:88px;height:36px;background:#8dbcaa;"></div>
<div style="left:1186px;top:338px;width:84px;height:30px;background:#1b1214;"></div>
<div style="left:1184px;top:370px;width:88px;height:4px;background:#68927f;"></div>
<svg style="left:1186px;top:338px" width="84" height="30" viewBox="0 0 84 30"><use href="#dig" x="6" y="4"/><use href="#dig" x="26" y="4"/><use href="#dig" x="46" y="4"/><use href="#dig" x="66" y="4"/></svg>
<div style="left:1194px;top:378px;width:68px;height:20px;background:#5f8677;"></div>
<div class="rl" style="left:1194px;top:381px;width:64px;color:#b9c3b3">CH?</div>
<div style="left:1182px;top:400px;width:2px;height:40px;background:#2d3a31;"></div>
<div style="left:1184px;top:398px;width:88px;height:36px;background:#8dbcaa;"></div>
<div style="left:1186px;top:402px;width:84px;height:30px;background:#1b1214;"></div>
<div style="left:1184px;top:434px;width:88px;height:4px;background:#68927f;"></div>
<svg style="left:1186px;top:402px" width="84" height="30" viewBox="0 0 84 30"><use href="#dig" x="6" y="4"/><use href="#dig" x="26" y="4"/><use href="#dig" x="46" y="4"/><use href="#dig" x="66" y="4"/></svg>
<div class="code" style="left:792px;top:191px;font-size:28px;letter-spacing:-0.8px;line-height:28px;color:#efe6cb;">MOV&nbsp;ACC&nbsp;CH1</div>
<div class="code" style="left:792px;top:219px;font-size:28px;letter-spacing:-0.8px;line-height:28px;color:#efe6cb;">NEG</div>
<div class="code" style="left:792px;top:247px;font-size:28px;letter-spacing:-0.8px;line-height:28px;color:#efe6cb;">MOV&nbsp;CH2&nbsp;ACC</div>
<div style="left:784px;top:474px;width:488px;height:154px;background:#2d3a31;"></div>
<div style="left:788px;top:466px;width:488px;height:156px;background:#6e9a8b;"></div>
<div style="left:788px;top:492px;width:392px;height:4px;background:#5f8878;"></div>
<div style="left:788px;top:610px;width:488px;height:12px;background:#6a9383;"></div>
<div style="left:790px;top:496px;width:390px;height:114px;background:#141013;"></div>
<div class="tt" style="left:788px;top:469px;width:485px;">AW0401 ($7)</div>
<div style="left:1240px;top:470px;width:2px;height:24px;background:#2d3a31;"></div>
<div style="left:1242px;top:466px;width:26px;height:22px;background:#d36b6b;"></div>
<div style="left:1244px;top:468px;width:22px;height:18px;background:#9b2e34;"></div>
<div style="left:1242px;top:488px;width:26px;height:4px;background:#7a2228;"></div>
<svg style="left:1242px;top:466px" width="26" height="22" viewBox="0 0 26 22"><path d="M7,4 L19,16 M19,4 L7,16" stroke="#d86a6a" stroke-width="4"/></svg>
<div style="left:1194px;top:492px;width:68px;height:20px;background:#5f8677;"></div>
<div class="rl" style="left:1194px;top:495px;width:64px;color:#efe6cb">ACC</div>
<div style="left:1182px;top:514px;width:2px;height:40px;background:#2d3a31;"></div>
<div style="left:1184px;top:512px;width:88px;height:36px;background:#8dbcaa;"></div>
<div style="left:1186px;top:516px;width:84px;height:30px;background:#1b1214;"></div>
<div style="left:1184px;top:548px;width:88px;height:4px;background:#68927f;"></div>
<svg style="left:1186px;top:516px" width="84" height="30" viewBox="0 0 84 30"><use href="#dig" x="6" y="4"/><use href="#dig" x="26" y="4"/><use href="#dig" x="46" y="4"/><use href="#dig" x="66" y="4"/></svg>
<div style="left:1194px;top:552px;width:68px;height:20px;background:#5f8677;"></div>
<div class="rl" style="left:1194px;top:555px;width:64px;color:#b9c3b3">CH?</div>
<div style="left:1182px;top:574px;width:2px;height:40px;background:#2d3a31;"></div>
<div style="left:1184px;top:572px;width:88px;height:36px;background:#8dbcaa;"></div>
<div style="left:1186px;top:576px;width:84px;height:30px;background:#1b1214;"></div>
<div style="left:1184px;top:608px;width:88px;height:4px;background:#68927f;"></div>
<svg style="left:1186px;top:576px" width="84" height="30" viewBox="0 0 84 30"><use href="#dig" x="6" y="4"/><use href="#dig" x="26" y="4"/><use href="#dig" x="46" y="4"/><use href="#dig" x="66" y="4"/></svg>
<div class="code" style="left:792px;top:497px;font-size:28px;letter-spacing:-0.8px;line-height:28px;color:#efe6cb;">MOV&nbsp;CH2&nbsp;CH3</div>
<div style="left:784px;top:640px;width:488px;height:294px;background:#2d3a31;"></div>
<div style="left:788px;top:632px;width:488px;height:296px;background:#6e9a8b;"></div>
<div style="left:788px;top:658px;width:392px;height:4px;background:#5f8878;"></div>
<div style="left:788px;top:916px;width:488px;height:12px;background:#6a9383;"></div>
<div style="left:790px;top:662px;width:390px;height:254px;background:#141013;"></div>
<div class="tt" style="left:788px;top:635px;width:485px;">AW0903 ($21)</div>
<div style="left:1240px;top:636px;width:2px;height:24px;background:#2d3a31;"></div>
<div style="left:1242px;top:632px;width:26px;height:22px;background:#d36b6b;"></div>
<div style="left:1244px;top:634px;width:22px;height:18px;background:#9b2e34;"></div>
<div style="left:1242px;top:654px;width:26px;height:4px;background:#7a2228;"></div>
<svg style="left:1242px;top:632px" width="26" height="22" viewBox="0 0 26 22"><path d="M7,4 L19,16 M19,4 L7,16" stroke="#d86a6a" stroke-width="4"/></svg>
<div style="left:1194px;top:658px;width:68px;height:20px;background:#5f8677;"></div>
<div class="rl" style="left:1194px;top:661px;width:64px;color:#efe6cb">ACC</div>
<div style="left:1182px;top:680px;width:2px;height:40px;background:#2d3a31;"></div>
<div style="left:1184px;top:678px;width:88px;height:36px;background:#8dbcaa;"></div>
<div style="left:1186px;top:682px;width:84px;height:30px;background:#1b1214;"></div>
<div style="left:1184px;top:714px;width:88px;height:4px;background:#68927f;"></div>
<svg style="left:1186px;top:682px" width="84" height="30" viewBox="0 0 84 30"><use href="#dig" x="6" y="4"/><use href="#dig" x="26" y="4"/><use href="#dig" x="46" y="4"/><use href="#dig" x="66" y="4"/></svg>
<div style="left:1194px;top:722px;width:68px;height:20px;background:#5f8677;"></div>
<div class="rl" style="left:1194px;top:725px;width:64px;color:#b9c3b3">CH?</div>
<div style="left:1182px;top:744px;width:2px;height:40px;background:#2d3a31;"></div>
<div style="left:1184px;top:742px;width:88px;height:36px;background:#8dbcaa;"></div>
<div style="left:1186px;top:746px;width:84px;height:30px;background:#1b1214;"></div>
<div style="left:1184px;top:778px;width:88px;height:4px;background:#68927f;"></div>
<svg style="left:1186px;top:746px" width="84" height="30" viewBox="0 0 84 30"><use href="#dig" x="6" y="4"/><use href="#dig" x="26" y="4"/><use href="#dig" x="46" y="4"/><use href="#dig" x="66" y="4"/></svg>
<div style="left:1194px;top:786px;width:68px;height:20px;background:#5f8677;"></div>
<div class="rl" style="left:1194px;top:789px;width:64px;color:#b9c3b3">CH?</div>
<div style="left:1182px;top:808px;width:2px;height:40px;background:#2d3a31;"></div>
<div style="left:1184px;top:806px;width:88px;height:36px;background:#8dbcaa;"></div>
<div style="left:1186px;top:810px;width:84px;height:30px;background:#1b1214;"></div>
<div style="left:1184px;top:842px;width:88px;height:4px;background:#68927f;"></div>
<svg style="left:1186px;top:810px" width="84" height="30" viewBox="0 0 84 30"><use href="#dig" x="6" y="4"/><use href="#dig" x="26" y="4"/><use href="#dig" x="46" y="4"/><use href="#dig" x="66" y="4"/></svg>
<div style="left:1194px;top:850px;width:68px;height:20px;background:#5f8677;"></div>
<div class="rl" style="left:1194px;top:853px;width:64px;color:#b9c3b3">CH?</div>
<div style="left:1182px;top:872px;width:2px;height:40px;background:#2d3a31;"></div>
<div style="left:1184px;top:870px;width:88px;height:36px;background:#8dbcaa;"></div>
<div style="left:1186px;top:874px;width:84px;height:30px;background:#1b1214;"></div>
<div style="left:1184px;top:906px;width:88px;height:4px;background:#68927f;"></div>
<svg style="left:1186px;top:874px" width="84" height="30" viewBox="0 0 84 30"><use href="#dig" x="6" y="4"/><use href="#dig" x="26" y="4"/><use href="#dig" x="46" y="4"/><use href="#dig" x="66" y="4"/></svg>
<div style="left:790px;top:662px;width:390px;height:28px;background:#a84246;"></div>
<div class="code" style="left:792px;top:663px;font-size:28px;letter-spacing:-0.8px;line-height:28px;color:#efe6cb;">JEZ&nbsp;CH2&nbsp;</div>
<div style="left:920px;top:665px;width:2px;height:22px;background:#efe6cb;"></div>
<div style="left:790px;top:914px;width:484px;height:26px;background:#a84246;"></div>
<div class="err" style="left:790px;top:916px;width:484px;">"JEZ" requires 2 parameters</div>
<div style="left:1296px;top:168px;width:488px;height:294px;background:#2d3a31;"></div>
<div style="left:1300px;top:160px;width:488px;height:296px;background:#6e9a8b;"></div>
<div style="left:1300px;top:186px;width:392px;height:4px;background:#5f8878;"></div>
<div style="left:1300px;top:444px;width:488px;height:12px;background:#6a9383;"></div>
<div style="left:1302px;top:190px;width:390px;height:254px;background:#141013;"></div>
<div class="tt" style="left:1300px;top:163px;width:485px;">AW0903 ($21)</div>
<div style="left:1752px;top:164px;width:2px;height:24px;background:#2d3a31;"></div>
<div style="left:1754px;top:160px;width:26px;height:22px;background:#d36b6b;"></div>
<div style="left:1756px;top:162px;width:22px;height:18px;background:#9b2e34;"></div>
<div style="left:1754px;top:182px;width:26px;height:4px;background:#7a2228;"></div>
<svg style="left:1754px;top:160px" width="26" height="22" viewBox="0 0 26 22"><path d="M7,4 L19,16 M19,4 L7,16" stroke="#d86a6a" stroke-width="4"/></svg>
<div style="left:1706px;top:186px;width:68px;height:20px;background:#5f8677;"></div>
<div class="rl" style="left:1706px;top:189px;width:64px;color:#efe6cb">ACC</div>
<div style="left:1694px;top:208px;width:2px;height:40px;background:#2d3a31;"></div>
<div style="left:1696px;top:206px;width:88px;height:36px;background:#8dbcaa;"></div>
<div style="left:1698px;top:210px;width:84px;height:30px;background:#1b1214;"></div>
<div style="left:1696px;top:242px;width:88px;height:4px;background:#68927f;"></div>
<svg style="left:1698px;top:210px" width="84" height="30" viewBox="0 0 84 30"><use href="#dig" x="6" y="4"/><use href="#dig" x="26" y="4"/><use href="#dig" x="46" y="4"/><use href="#dig" x="66" y="4"/></svg>
<div style="left:1706px;top:250px;width:68px;height:20px;background:#5f8677;"></div>
<div class="rl" style="left:1706px;top:253px;width:64px;color:#b9c3b3">CH?</div>
<div style="left:1694px;top:272px;width:2px;height:40px;background:#2d3a31;"></div>
<div style="left:1696px;top:270px;width:88px;height:36px;background:#8dbcaa;"></div>
<div style="left:1698px;top:274px;width:84px;height:30px;background:#1b1214;"></div>
<div style="left:1696px;top:306px;width:88px;height:4px;background:#68927f;"></div>
<svg style="left:1698px;top:274px" width="84" height="30" viewBox="0 0 84 30"><use href="#dig" x="6" y="4"/><use href="#dig" x="26" y="4"/><use href="#dig" x="46" y="4"/><use href="#dig" x="66" y="4"/></svg>
<div style="left:1706px;top:314px;width:68px;height:20px;background:#5f8677;"></div>
<div class="rl" style="left:1706px;top:317px;width:64px;color:#b9c3b3">CH?</div>
<div style="left:1694px;top:336px;width:2px;height:40px;background:#2d3a31;"></div>
<div style="left:1696px;top:334px;width:88px;height:36px;background:#8dbcaa;"></div>
<div style="left:1698px;top:338px;width:84px;height:30px;background:#1b1214;"></div>
<div style="left:1696px;top:370px;width:88px;height:4px;background:#68927f;"></div>
<svg style="left:1698px;top:338px" width="84" height="30" viewBox="0 0 84 30"><use href="#dig" x="6" y="4"/><use href="#dig" x="26" y="4"/><use href="#dig" x="46" y="4"/><use href="#dig" x="66" y="4"/></svg>
<div style="left:1706px;top:378px;width:68px;height:20px;background:#5f8677;"></div>
<div class="rl" style="left:1706px;top:381px;width:64px;color:#b9c3b3">CH?</div>
<div style="left:1694px;top:400px;width:2px;height:40px;background:#2d3a31;"></div>
<div style="left:1696px;top:398px;width:88px;height:36px;background:#8dbcaa;"></div>
<div style="left:1698px;top:402px;width:84px;height:30px;background:#1b1214;"></div>
<div style="left:1696px;top:434px;width:88px;height:4px;background:#68927f;"></div>
<svg style="left:1698px;top:402px" width="84" height="30" viewBox="0 0 84 30"><use href="#dig" x="6" y="4"/><use href="#dig" x="26" y="4"/><use href="#dig" x="46" y="4"/><use href="#dig" x="66" y="4"/></svg>
<div class="code" style="left:1304px;top:191px;font-size:28px;letter-spacing:-0.8px;line-height:28px;color:#efe6cb;">a:&nbsp;NOOP</div>
<div class="code" style="left:1304px;top:219px;font-size:28px;letter-spacing:-0.8px;line-height:28px;color:#efe6cb;">b:&nbsp;MOV&nbsp;ACC&nbsp;INPUT</div>
<div class="code" style="left:1304px;top:247px;font-size:28px;letter-spacing:-0.8px;line-height:28px;color:#efe6cb;">JEZ&nbsp;CH1&nbsp;a</div>
<div class="code" style="left:1304px;top:275px;font-size:28px;letter-spacing:-0.8px;line-height:28px;color:#efe6cb;">MOV&nbsp;OUTPUT&nbsp;ACC</div>
<div class="code" style="left:1304px;top:303px;font-size:28px;letter-spacing:-0.8px;line-height:28px;color:#efe6cb;">JMP&nbsp;b</div>
<div style="left:1296px;top:474px;width:488px;height:294px;background:#2d3a31;"></div>
<div style="left:1300px;top:466px;width:488px;height:296px;background:#6e9a8b;"></div>
<div style="left:1300px;top:492px;width:392px;height:4px;background:#5f8878;"></div>
<div style="left:1300px;top:750px;width:488px;height:12px;background:#6a9383;"></div>
<div style="left:1302px;top:496px;width:390px;height:254px;background:#141013;"></div>
<div class="tt" style="left:1300px;top:469px;width:485px;">AW0903 ($21)</div>
<div style="left:1752px;top:470px;width:2px;height:24px;background:#2d3a31;"></div>
<div style="left:1754px;top:466px;width:26px;height:22px;background:#d36b6b;"></div>
<div style="left:1756px;top:468px;width:22px;height:18px;background:#9b2e34;"></div>
<div style="left:1754px;top:488px;width:26px;height:4px;background:#7a2228;"></div>
<svg style="left:1754px;top:466px" width="26" height="22" viewBox="0 0 26 22"><path d="M7,4 L19,16 M19,4 L7,16" stroke="#d86a6a" stroke-width="4"/></svg>
<div style="left:1706px;top:492px;width:68px;height:20px;background:#5f8677;"></div>
<div class="rl" style="left:1706px;top:495px;width:64px;color:#efe6cb">ACC</div>
<div style="left:1694px;top:514px;width:2px;height:40px;background:#2d3a31;"></div>
<div style="left:1696px;top:512px;width:88px;height:36px;background:#8dbcaa;"></div>
<div style="left:1698px;top:516px;width:84px;height:30px;background:#1b1214;"></div>
<div style="left:1696px;top:548px;width:88px;height:4px;background:#68927f;"></div>
<svg style="left:1698px;top:516px" width="84" height="30" viewBox="0 0 84 30"><use href="#dig" x="6" y="4"/><use href="#dig" x="26" y="4"/><use href="#dig" x="46" y="4"/><use href="#dig" x="66" y="4"/></svg>
<div style="left:1706px;top:556px;width:68px;height:20px;background:#5f8677;"></div>
<div class="rl" style="left:1706px;top:559px;width:64px;color:#b9c3b3">CH?</div>
<div style="left:1694px;top:578px;width:2px;height:40px;background:#2d3a31;"></div>
<div style="left:1696px;top:576px;width:88px;height:36px;background:#8dbcaa;"></div>
<div style="left:1698px;top:580px;width:84px;height:30px;background:#1b1214;"></div>
<div style="left:1696px;top:612px;width:88px;height:4px;background:#68927f;"></div>
<svg style="left:1698px;top:580px" width="84" height="30" viewBox="0 0 84 30"><use href="#dig" x="6" y="4"/><use href="#dig" x="26" y="4"/><use href="#dig" x="46" y="4"/><use href="#dig" x="66" y="4"/></svg>
<div style="left:1706px;top:620px;width:68px;height:20px;background:#5f8677;"></div>
<div class="rl" style="left:1706px;top:623px;width:64px;color:#b9c3b3">CH?</div>
<div style="left:1694px;top:642px;width:2px;height:40px;background:#2d3a31;"></div>
<div style="left:1696px;top:640px;width:88px;height:36px;background:#8dbcaa;"></div>
<div style="left:1698px;top:644px;width:84px;height:30px;background:#1b1214;"></div>
<div style="left:1696px;top:676px;width:88px;height:4px;background:#68927f;"></div>
<svg style="left:1698px;top:644px" width="84" height="30" viewBox="0 0 84 30"><use href="#dig" x="6" y="4"/><use href="#dig" x="26" y="4"/><use href="#dig" x="46" y="4"/><use href="#dig" x="66" y="4"/></svg>
<div style="left:1706px;top:684px;width:68px;height:20px;background:#5f8677;"></div>
<div class="rl" style="left:1706px;top:687px;width:64px;color:#b9c3b3">CH?</div>
<div style="left:1694px;top:706px;width:2px;height:40px;background:#2d3a31;"></div>
<div style="left:1696px;top:704px;width:88px;height:36px;background:#8dbcaa;"></div>
<div style="left:1698px;top:708px;width:84px;height:30px;background:#1b1214;"></div>
<div style="left:1696px;top:740px;width:88px;height:4px;background:#68927f;"></div>
<svg style="left:1698px;top:708px" width="84" height="30" viewBox="0 0 84 30"><use href="#dig" x="6" y="4"/><use href="#dig" x="26" y="4"/><use href="#dig" x="46" y="4"/><use href="#dig" x="66" y="4"/></svg>
<div class="code" style="left:1304px;top:497px;font-size:28px;letter-spacing:-0.8px;line-height:28px;color:#efe6cb;">B:&nbsp;MOV&nbsp;ACC&nbsp;INPUT</div>
<div class="code" style="left:1304px;top:525px;font-size:28px;letter-spacing:-0.8px;line-height:28px;color:#efe6cb;">JEZ&nbsp;CH2&nbsp;A</div>
<div class="code" style="left:1304px;top:553px;font-size:28px;letter-spacing:-0.8px;line-height:28px;color:#efe6cb;">MOV&nbsp;OUTPUT&nbsp;ACC</div>
<div class="code" style="left:1304px;top:581px;font-size:28px;letter-spacing:-0.8px;line-height:28px;color:#efe6cb;">JMP&nbsp;B</div>
<div class="code" style="left:1304px;top:609px;font-size:28px;letter-spacing:-0.8px;line-height:28px;color:#efe6cb;">A:&nbsp;NOP</div>
<div class="code" style="left:1304px;top:637px;font-size:28px;letter-spacing:-0.8px;line-height:28px;color:#efe6cb;">NOP</div>
<svg style="left:260px;top:191px" width="16" height="24" viewBox="0 0 16 24"><path d="M0,12 H16 V24 H4 L0,20 Z" fill="#3a2d22"/><path d="M5,8 H14 V12 H5 Z" fill="#8b8776"/><path d="M6,0 H14 V8 H6 V12 H2 V4 L4,2 L6,2 Z" fill="#eee4c9"/></svg>
<svg style="left:260px;top:293px" width="16" height="24" viewBox="0 0 16 24"><path d="M0,12 H16 V24 H4 L0,20 Z" fill="#3a2d22"/><path d="M5,8 H14 V12 H5 Z" fill="#8b8776"/><path d="M6,0 H14 V8 H6 V12 H2 V4 L4,2 L6,2 Z" fill="#eee4c9"/></svg>
<svg style="left:260px;top:328px" width="16" height="24" viewBox="0 0 16 24"><path d="M0,12 H16 V24 H4 L0,20 Z" fill="#3a2d22"/><path d="M5,8 H14 V12 H5 Z" fill="#8b8776"/><path d="M6,0 H14 V8 H6 V12 H2 V4 L4,2 L6,2 Z" fill="#eee4c9"/></svg>
<svg style="left:260px;top:362px" width="16" height="24" viewBox="0 0 16 24"><path d="M0,12 H16 V24 H4 L0,20 Z" fill="#3a2d22"/><path d="M5,8 H14 V12 H5 Z" fill="#8b8776"/><path d="M6,0 H14 V8 H6 V12 H2 V4 L4,2 L6,2 Z" fill="#eee4c9"/></svg>
<svg style="left:260px;top:499px" width="16" height="24" viewBox="0 0 16 24"><path d="M0,12 H16 V24 H4 L0,20 Z" fill="#3a2d22"/><path d="M5,8 H14 V12 H5 Z" fill="#8b8776"/><path d="M6,0 H14 V8 H6 V12 H2 V4 L4,2 L6,2 Z" fill="#eee4c9"/></svg>
<svg style="left:260px;top:602px" width="16" height="24" viewBox="0 0 16 24"><path d="M0,12 H16 V24 H4 L0,20 Z" fill="#3a2d22"/><path d="M5,8 H14 V12 H5 Z" fill="#8b8776"/><path d="M6,0 H14 V8 H6 V12 H2 V4 L4,2 L6,2 Z" fill="#eee4c9"/></svg>
<svg style="left:772px;top:191px" width="16" height="24" viewBox="0 0 16 24"><path d="M0,12 H16 V24 H4 L0,20 Z" fill="#3a2d22"/><path d="M5,8 H14 V12 H5 Z" fill="#8b8776"/><path d="M6,0 H14 V8 H6 V12 H2 V4 L4,2 L6,2 Z" fill="#eee4c9"/></svg>
<svg style="left:772px;top:430px" width="16" height="24" viewBox="0 0 16 24"><path d="M0,12 H16 V24 H4 L0,20 Z" fill="#3a2d22"/><path d="M5,8 H14 V12 H5 Z" fill="#8b8776"/><path d="M6,0 H14 V8 H6 V12 H2 V4 L4,2 L6,2 Z" fill="#eee4c9"/></svg>
<svg style="left:772px;top:499px" width="16" height="24" viewBox="0 0 16 24"><path d="M0,12 H16 V24 H4 L0,20 Z" fill="#3a2d22"/><path d="M5,8 H14 V12 H5 Z" fill="#8b8776"/><path d="M6,0 H14 V8 H6 V12 H2 V4 L4,2 L6,2 Z" fill="#eee4c9"/></svg>
<svg style="left:772px;top:636px" width="16" height="24" viewBox="0 0 16 24"><path d="M0,12 H16 V24 H4 L0,20 Z" fill="#3a2d22"/><path d="M5,8 H14 V12 H5 Z" fill="#8b8776"/><path d="M6,0 H14 V8 H6 V12 H2 V4 L4,2 L6,2 Z" fill="#eee4c9"/></svg>
<svg style="left:772px;top:704px" width="16" height="24" viewBox="0 0 16 24"><path d="M0,12 H16 V24 H4 L0,20 Z" fill="#3a2d22"/><path d="M5,8 H14 V12 H5 Z" fill="#8b8776"/><path d="M6,0 H14 V8 H6 V12 H2 V4 L4,2 L6,2 Z" fill="#eee4c9"/></svg>
<svg style="left:1284px;top:293px" width="16" height="24" viewBox="0 0 16 24"><path d="M0,12 H16 V24 H4 L0,20 Z" fill="#3a2d22"/><path d="M5,8 H14 V12 H5 Z" fill="#8b8776"/><path d="M6,0 H14 V8 H6 V12 H2 V4 L4,2 L6,2 Z" fill="#eee4c9"/></svg>
<svg style="left:1284px;top:362px" width="16" height="24" viewBox="0 0 16 24"><path d="M0,12 H16 V24 H4 L0,20 Z" fill="#3a2d22"/><path d="M5,8 H14 V12 H5 Z" fill="#8b8776"/><path d="M6,0 H14 V8 H6 V12 H2 V4 L4,2 L6,2 Z" fill="#eee4c9"/></svg>
<svg style="left:1284px;top:602px" width="16" height="24" viewBox="0 0 16 24"><path d="M0,12 H16 V24 H4 L0,20 Z" fill="#3a2d22"/><path d="M5,8 H14 V12 H5 Z" fill="#8b8776"/><path d="M6,0 H14 V8 H6 V12 H2 V4 L4,2 L6,2 Z" fill="#eee4c9"/></svg>
<svg style="left:1284px;top:670px" width="16" height="24" viewBox="0 0 16 24"><path d="M0,12 H16 V24 H4 L0,20 Z" fill="#3a2d22"/><path d="M5,8 H14 V12 H5 Z" fill="#8b8776"/><path d="M6,0 H14 V8 H6 V12 H2 V4 L4,2 L6,2 Z" fill="#eee4c9"/></svg>
<svg style="left:764px;top:293px" width="16" height="24" viewBox="0 0 16 24"><path d="M0,12 H14 V20 L10,24 H0 Z" fill="#3a2d22"/><path d="M0,8 H10 V12 H0 Z" fill="#8b8776"/><path d="M0,0 H10 V2 L12,2 L14,4 V12 H10 V8 H0 Z" fill="#eee4c9"/></svg>
<svg style="left:764px;top:362px" width="16" height="24" viewBox="0 0 16 24"><path d="M0,12 H14 V20 L10,24 H0 Z" fill="#3a2d22"/><path d="M0,8 H10 V12 H0 Z" fill="#8b8776"/><path d="M0,0 H10 V2 L12,2 L14,4 V12 H10 V8 H0 Z" fill="#eee4c9"/></svg>
<svg style="left:764px;top:602px" width="16" height="24" viewBox="0 0 16 24"><path d="M0,12 H14 V20 L10,24 H0 Z" fill="#3a2d22"/><path d="M0,8 H10 V12 H0 Z" fill="#8b8776"/><path d="M0,0 H10 V2 L12,2 L14,4 V12 H10 V8 H0 Z" fill="#eee4c9"/></svg>
<svg style="left:764px;top:670px" width="16" height="24" viewBox="0 0 16 24"><path d="M0,12 H14 V20 L10,24 H0 Z" fill="#3a2d22"/><path d="M0,8 H10 V12 H0 Z" fill="#8b8776"/><path d="M0,0 H10 V2 L12,2 L14,4 V12 H10 V8 H0 Z" fill="#eee4c9"/></svg>
<svg style="left:1276px;top:328px" width="16" height="24" viewBox="0 0 16 24"><path d="M0,12 H14 V20 L10,24 H0 Z" fill="#3a2d22"/><path d="M0,8 H10 V12 H0 Z" fill="#8b8776"/><path d="M0,0 H10 V2 L12,2 L14,4 V12 H10 V8 H0 Z" fill="#eee4c9"/></svg>
<svg style="left:1276px;top:430px" width="16" height="24" viewBox="0 0 16 24"><path d="M0,12 H14 V20 L10,24 H0 Z" fill="#3a2d22"/><path d="M0,8 H10 V12 H0 Z" fill="#8b8776"/><path d="M0,0 H10 V2 L12,2 L14,4 V12 H10 V8 H0 Z" fill="#eee4c9"/></svg>
<svg style="left:1276px;top:499px" width="16" height="24" viewBox="0 0 16 24"><path d="M0,12 H14 V20 L10,24 H0 Z" fill="#3a2d22"/><path d="M0,8 H10 V12 H0 Z" fill="#8b8776"/><path d="M0,0 H10 V2 L12,2 L14,4 V12 H10 V8 H0 Z" fill="#eee4c9"/></svg>
<svg style="left:1276px;top:636px" width="16" height="24" viewBox="0 0 16 24"><path d="M0,12 H14 V20 L10,24 H0 Z" fill="#3a2d22"/><path d="M0,8 H10 V12 H0 Z" fill="#8b8776"/><path d="M0,0 H10 V2 L12,2 L14,4 V12 H10 V8 H0 Z" fill="#eee4c9"/></svg>
<svg style="left:1276px;top:704px" width="16" height="24" viewBox="0 0 16 24"><path d="M0,12 H14 V20 L10,24 H0 Z" fill="#3a2d22"/><path d="M0,8 H10 V12 H0 Z" fill="#8b8776"/><path d="M0,0 H10 V2 L12,2 L14,4 V12 H10 V8 H0 Z" fill="#eee4c9"/></svg>
<svg style="left:1788px;top:293px" width="16" height="24" viewBox="0 0 16 24"><path d="M0,12 H14 V20 L10,24 H0 Z" fill="#3a2d22"/><path d="M0,8 H10 V12 H0 Z" fill="#8b8776"/><path d="M0,0 H10 V2 L12,2 L14,4 V12 H10 V8 H0 Z" fill="#eee4c9"/></svg>
<svg style="left:1788px;top:430px" width="16" height="24" viewBox="0 0 16 24"><path d="M0,12 H14 V20 L10,24 H0 Z" fill="#3a2d22"/><path d="M0,8 H10 V12 H0 Z" fill="#8b8776"/><path d="M0,0 H10 V2 L12,2 L14,4 V12 H10 V8 H0 Z" fill="#eee4c9"/></svg>
<svg style="left:1788px;top:602px" width="16" height="24" viewBox="0 0 16 24"><path d="M0,12 H14 V20 L10,24 H0 Z" fill="#3a2d22"/><path d="M0,8 H10 V12 H0 Z" fill="#8b8776"/><path d="M0,0 H10 V2 L12,2 L14,4 V12 H10 V8 H0 Z" fill="#eee4c9"/></svg>
<svg style="left:1788px;top:636px" width="16" height="24" viewBox="0 0 16 24"><path d="M0,12 H14 V20 L10,24 H0 Z" fill="#3a2d22"/><path d="M0,8 H10 V12 H0 Z" fill="#8b8776"/><path d="M0,0 H10 V2 L12,2 L14,4 V12 H10 V8 H0 Z" fill="#eee4c9"/></svg>
<div style="left:356px;top:806px;width:306px;height:66px;background:#2d3a31;"></div>
<div style="left:362px;top:804px;width:308px;height:66px;background:#5e3d2a;"></div>
<div style="left:366px;top:798px;width:304px;height:58px;background:#bf8457;"></div>
<div style="left:366px;top:856px;width:304px;height:6px;background:#a86f47;"></div>
<div class="add" style="left:366px;top:817px;width:304px;">+ Add Chip...</div>
<div style="left:1380px;top:780px;width:306px;height:66px;background:#2d3a31;"></div>
<div style="left:1386px;top:778px;width:308px;height:66px;background:#5e3d2a;"></div>
<div style="left:1390px;top:772px;width:304px;height:58px;background:#bf8457;"></div>
<div style="left:1390px;top:830px;width:304px;height:6px;background:#a86f47;"></div>
<div class="add" style="left:1390px;top:791px;width:304px;">+ Add Chip...</div>
<div style="left:1834px;top:150px;width:67px;height:20px;background:#7a5238;"></div>
<div class="ch" style="left:1834px;top:154px;width:64px;">CH1</div>
<div style="left:1820px;top:172px;width:92px;height:42px;background:#2a1f19;"></div>
<div style="left:1824px;top:170px;width:88px;height:36px;background:#a97a50;"></div>
<div style="left:1824px;top:206px;width:88px;height:4px;background:#5e3f2a;"></div>
<div style="left:1826px;top:172px;width:84px;height:32px;background:#1b1214;"></div>
<svg style="left:1826px;top:172px" width="84" height="32" viewBox="0 0 84 32"><use href="#dig" x="6" y="5"/><use href="#dig" x="27" y="5"/><use href="#dig" x="48" y="5"/><use href="#dig" x="69" y="5"/></svg>
<div style="left:1834px;top:222px;width:67px;height:20px;background:#7a5238;"></div>
<div class="ch" style="left:1834px;top:226px;width:64px;">CH2</div>
<div style="left:1820px;top:244px;width:92px;height:42px;background:#2a1f19;"></div>
<div style="left:1824px;top:242px;width:88px;height:36px;background:#a97a50;"></div>
<div style="left:1824px;top:278px;width:88px;height:4px;background:#5e3f2a;"></div>
<div style="left:1826px;top:244px;width:84px;height:32px;background:#1b1214;"></div>
<svg style="left:1826px;top:244px" width="84" height="32" viewBox="0 0 84 32"><use href="#dig" x="6" y="5"/><use href="#dig" x="27" y="5"/><use href="#dig" x="48" y="5"/><use href="#dig" x="69" y="5"/></svg>
<div style="left:1834px;top:294px;width:67px;height:20px;background:#7a5238;"></div>
<div class="ch" style="left:1834px;top:298px;width:64px;">CH3</div>
<div style="left:1820px;top:316px;width:92px;height:42px;background:#2a1f19;"></div>
<div style="left:1824px;top:314px;width:88px;height:36px;background:#a97a50;"></div>
<div style="left:1824px;top:350px;width:88px;height:4px;background:#5e3f2a;"></div>
<div style="left:1826px;top:316px;width:84px;height:32px;background:#1b1214;"></div>
<svg style="left:1826px;top:316px" width="84" height="32" viewBox="0 0 84 32"><use href="#dig" x="6" y="5"/><use href="#dig" x="27" y="5"/><use href="#dig" x="48" y="5"/><use href="#dig" x="69" y="5"/></svg>
<div style="left:1834px;top:366px;width:67px;height:20px;background:#7a5238;"></div>
<div class="ch" style="left:1834px;top:370px;width:64px;">CH4</div>
<div style="left:1820px;top:388px;width:92px;height:42px;background:#2a1f19;"></div>
<div style="left:1824px;top:386px;width:88px;height:36px;background:#a97a50;"></div>
<div style="left:1824px;top:422px;width:88px;height:4px;background:#5e3f2a;"></div>
<div style="left:1826px;top:388px;width:84px;height:32px;background:#1b1214;"></div>
<svg style="left:1826px;top:388px" width="84" height="32" viewBox="0 0 84 32"><use href="#dig" x="6" y="5"/><use href="#dig" x="27" y="5"/><use href="#dig" x="48" y="5"/><use href="#dig" x="69" y="5"/></svg>
<div style="left:1834px;top:438px;width:67px;height:20px;background:#7a5238;"></div>
<div class="ch" style="left:1834px;top:442px;width:64px;">CH5</div>
<div style="left:1820px;top:460px;width:92px;height:42px;background:#2a1f19;"></div>
<div style="left:1824px;top:458px;width:88px;height:36px;background:#a97a50;"></div>
<div style="left:1824px;top:494px;width:88px;height:4px;background:#5e3f2a;"></div>
<div style="left:1826px;top:460px;width:84px;height:32px;background:#1b1214;"></div>
<svg style="left:1826px;top:460px" width="84" height="32" viewBox="0 0 84 32"><use href="#dig" x="6" y="5"/><use href="#dig" x="27" y="5"/><use href="#dig" x="48" y="5"/><use href="#dig" x="69" y="5"/></svg>
<div style="left:1834px;top:510px;width:67px;height:20px;background:#7a5238;"></div>
<div class="ch" style="left:1834px;top:514px;width:64px;">CH6</div>
<div style="left:1820px;top:532px;width:92px;height:42px;background:#2a1f19;"></div>
<div style="left:1824px;top:530px;width:88px;height:36px;background:#a97a50;"></div>
<div style="left:1824px;top:566px;width:88px;height:4px;background:#5e3f2a;"></div>
<div style="left:1826px;top:532px;width:84px;height:32px;background:#1b1214;"></div>
<svg style="left:1826px;top:532px" width="84" height="32" viewBox="0 0 84 32"><use href="#dig" x="6" y="5"/><use href="#dig" x="27" y="5"/><use href="#dig" x="48" y="5"/><use href="#dig" x="69" y="5"/></svg>
<div style="left:1834px;top:582px;width:67px;height:20px;background:#7a5238;"></div>
<div class="ch" style="left:1834px;top:586px;width:64px;">CH7</div>
<div style="left:1820px;top:604px;width:92px;height:42px;background:#2a1f19;"></div>
<div style="left:1824px;top:602px;width:88px;height:36px;background:#a97a50;"></div>
<div style="left:1824px;top:638px;width:88px;height:4px;background:#5e3f2a;"></div>
<div style="left:1826px;top:604px;width:84px;height:32px;background:#1b1214;"></div>
<svg style="left:1826px;top:604px" width="84" height="32" viewBox="0 0 84 32"><use href="#dig" x="6" y="5"/><use href="#dig" x="27" y="5"/><use href="#dig" x="48" y="5"/><use href="#dig" x="69" y="5"/></svg>
<div style="left:1834px;top:654px;width:67px;height:20px;background:#7a5238;"></div>
<div class="ch" style="left:1834px;top:658px;width:64px;">CH8</div>
<div style="left:1820px;top:676px;width:92px;height:42px;background:#2a1f19;"></div>
<div style="left:1824px;top:674px;width:88px;height:36px;background:#a97a50;"></div>
<div style="left:1824px;top:710px;width:88px;height:4px;background:#5e3f2a;"></div>
<div style="left:1826px;top:676px;width:84px;height:32px;background:#1b1214;"></div>
<svg style="left:1826px;top:676px" width="84" height="32" viewBox="0 0 84 32"><use href="#dig" x="6" y="5"/><use href="#dig" x="27" y="5"/><use href="#dig" x="48" y="5"/><use href="#dig" x="69" y="5"/></svg>
<div style="left:1834px;top:726px;width:67px;height:20px;background:#7a5238;"></div>
<div class="ch" style="left:1834px;top:730px;width:64px;">CH9</div>
<div style="left:1820px;top:748px;width:92px;height:42px;background:#2a1f19;"></div>
<div style="left:1824px;top:746px;width:88px;height:36px;background:#a97a50;"></div>
<div style="left:1824px;top:782px;width:88px;height:4px;background:#5e3f2a;"></div>
<div style="left:1826px;top:748px;width:84px;height:32px;background:#1b1214;"></div>
<svg style="left:1826px;top:748px" width="84" height="32" viewBox="0 0 84 32"><use href="#dig" x="6" y="5"/><use href="#dig" x="27" y="5"/><use href="#dig" x="48" y="5"/><use href="#dig" x="69" y="5"/></svg>
<div style="left:1834px;top:798px;width:67px;height:20px;background:#7a5238;"></div>
<div class="ch" style="left:1834px;top:802px;width:64px;">CH10</div>
<div style="left:1820px;top:820px;width:92px;height:42px;background:#2a1f19;"></div>
<div style="left:1824px;top:818px;width:88px;height:36px;background:#a97a50;"></div>
<div style="left:1824px;top:854px;width:88px;height:4px;background:#5e3f2a;"></div>
<div style="left:1826px;top:820px;width:84px;height:32px;background:#1b1214;"></div>
<svg style="left:1826px;top:820px" width="84" height="32" viewBox="0 0 84 32"><use href="#dig" x="6" y="5"/><use href="#dig" x="27" y="5"/><use href="#dig" x="48" y="5"/><use href="#dig" x="69" y="5"/></svg>
<div style="left:1834px;top:870px;width:67px;height:20px;background:#7a5238;"></div>
<div class="ch" style="left:1834px;top:874px;width:64px;">CH11</div>
<div style="left:1820px;top:892px;width:92px;height:42px;background:#2a1f19;"></div>
<div style="left:1824px;top:890px;width:88px;height:36px;background:#a97a50;"></div>
<div style="left:1824px;top:926px;width:88px;height:4px;background:#5e3f2a;"></div>
<div style="left:1826px;top:892px;width:84px;height:32px;background:#1b1214;"></div>
<svg style="left:1826px;top:892px" width="84" height="32" viewBox="0 0 84 32"><use href="#dig" x="6" y="5"/><use href="#dig" x="27" y="5"/><use href="#dig" x="48" y="5"/><use href="#dig" x="69" y="5"/></svg>
<div style="left:1834px;top:942px;width:67px;height:20px;background:#7a5238;"></div>
<div class="ch" style="left:1834px;top:946px;width:64px;">CH12</div>
<div style="left:1820px;top:964px;width:92px;height:42px;background:#2a1f19;"></div>
<div style="left:1824px;top:962px;width:88px;height:36px;background:#a97a50;"></div>
<div style="left:1824px;top:998px;width:88px;height:4px;background:#5e3f2a;"></div>
<div style="left:1826px;top:964px;width:84px;height:32px;background:#1b1214;"></div>
<svg style="left:1826px;top:964px" width="84" height="32" viewBox="0 0 84 32"><use href="#dig" x="6" y="5"/><use href="#dig" x="27" y="5"/><use href="#dig" x="48" y="5"/><use href="#dig" x="69" y="5"/></svg>
<div style="left:1834px;top:1014px;width:67px;height:20px;background:#7a5238;"></div>
<div class="ch" style="left:1834px;top:1018px;width:64px;">CH13</div>
<div style="left:1820px;top:1036px;width:92px;height:42px;background:#2a1f19;"></div>
<div style="left:1824px;top:1034px;width:88px;height:36px;background:#a97a50;"></div>
<div style="left:1824px;top:1070px;width:88px;height:4px;background:#5e3f2a;"></div>
<div style="left:1826px;top:1036px;width:84px;height:32px;background:#1b1214;"></div>
<svg style="left:1826px;top:1036px" width="84" height="32" viewBox="0 0 84 32"><use href="#dig" x="6" y="5"/><use href="#dig" x="27" y="5"/><use href="#dig" x="48" y="5"/><use href="#dig" x="69" y="5"/></svg>
</body></html>
